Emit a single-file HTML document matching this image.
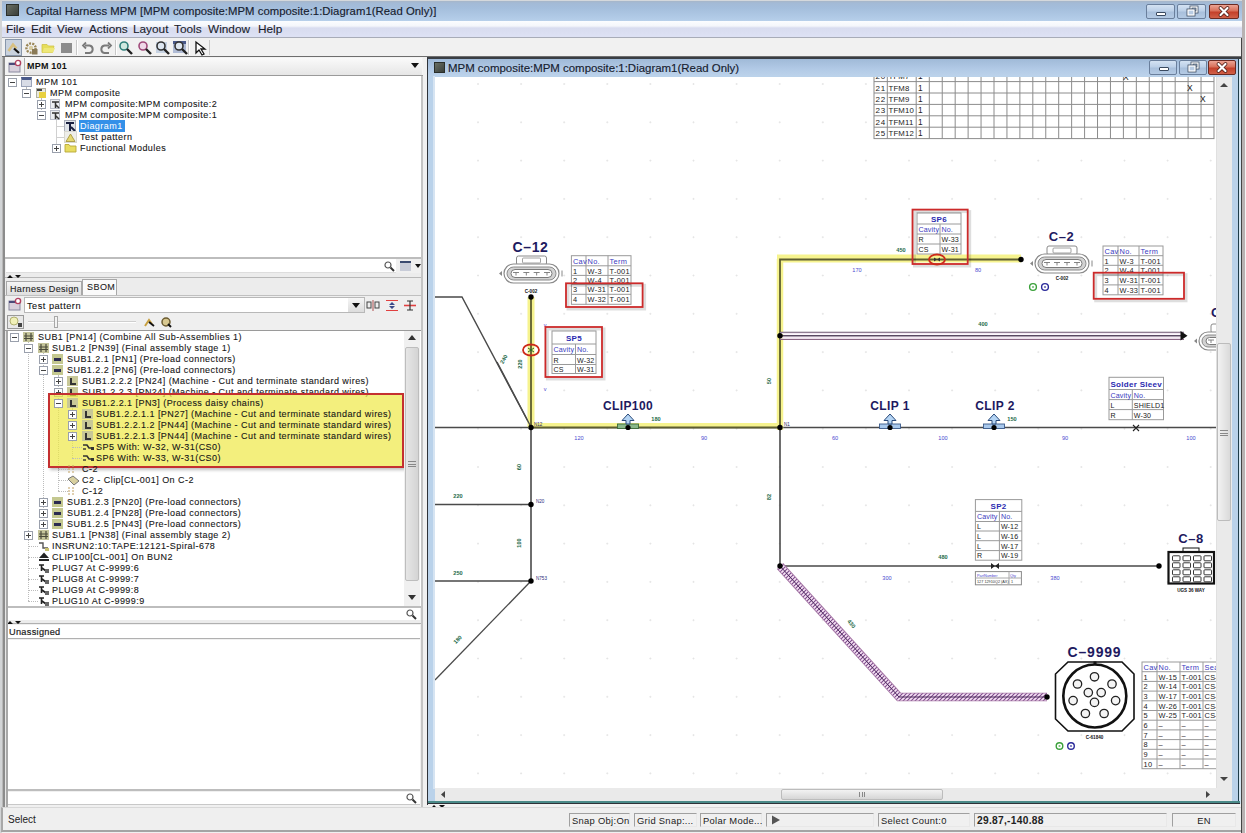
<!DOCTYPE html>
<html><head><meta charset="utf-8">
<style>
*{margin:0;padding:0;box-sizing:border-box}
html,body{width:1246px;height:833px;overflow:hidden;background:#f0f0f0;font-family:"Liberation Sans",sans-serif;color:#222}
.a{position:absolute}
.t{position:absolute;white-space:nowrap;line-height:1}
svg.a{overflow:visible}
</style></head><body>
<div class="a" style="left:0;top:0;width:1246px;height:833px;background:#f0f0f0"></div>
<div class="a" style="left:0;top:0;width:2px;height:833px;background:#d2d4d6"></div>
<div class="a" style="left:1243px;top:0;width:3px;height:833px;background:#c8ccd0"></div>
<div class="a" style="left:2px;top:0;width:1241px;height:21px;background:linear-gradient(#d4d8dc 0,#d4d8dc 1px,#a7b6c8 1px,#a3bad6 3px,#a4bedc 8px,#b3cce8 19px,#b8d0ea 21px)"></div>
<div class="a" style="left:6px;top:4px;width:13px;height:12px;background:linear-gradient(135deg,#6a6f64,#3a3f3a);border:1px solid #2a2e2a"></div>
<div class="t" style="left:26px;top:6px;font-size:11.3px;color:#16202e;letter-spacing:0.05px;-webkit-text-stroke:0.15px #16202e">Capital Harness MPM [MPM composite:MPM composite:1:Diagram1(Read Only)]</div>
<div class="a" style="left:1146px;top:4px;width:29px;height:15px;border:1px solid #6a7f9c;border-radius:2px;background:linear-gradient(#d4e2f2,#bcd0e8 45%,#a9c0dc 55%,#b4cae4)"></div>
<div class="a" style="left:1156px;top:12px;width:10px;height:4px;background:#fff;border:1px solid #3a4a60;border-radius:1px"></div>
<div class="a" style="left:1177px;top:4px;width:29px;height:15px;border:1px solid #6a7f9c;border-radius:2px;background:linear-gradient(#d4e2f2,#bcd0e8 45%,#a9c0dc 55%,#b4cae4)"></div>
<svg class="a" style="left:1186px;top:5px" width="13" height="12"><rect x="5" y="2" width="6" height="5" fill="none" stroke="#3a4a60" stroke-width="2.8"/><rect x="5" y="2" width="6" height="5" fill="none" stroke="#fff" stroke-width="1.3"/><rect x="2" y="5" width="6" height="5" fill="#3a4a60" stroke="#3a4a60" stroke-width="2.8"/><rect x="2" y="5" width="6" height="5" fill="#b8cce4" stroke="#fff" stroke-width="1.3"/></svg>
<div class="a" style="left:1209px;top:4px;width:30px;height:15px;border:1px solid #6a2a22;border-radius:2px;background:linear-gradient(#eca494,#d8705a 45%,#c4402a 55%,#d06048)"></div>
<svg class="a" style="left:1218px;top:6px" width="12" height="11"><path d="M2.5 2 L9.5 9 M9.5 2 L2.5 9" stroke="#4a1a14" stroke-width="3.8" stroke-linecap="round"/><path d="M2.5 2 L9.5 9 M9.5 2 L2.5 9" stroke="#fff" stroke-width="2.2" stroke-linecap="round"/></svg>
<div class="a" style="left:2px;top:21px;width:1241px;height:17px;background:linear-gradient(#fbfdff 0,#f4f6fb 5px,#d8dcef 7px,#dde1f4 15px);border-bottom:1px solid #a8acb8"></div>
<div class="t" style="left:6px;top:24px;font-size:11.8px;color:#1a1e2c;-webkit-text-stroke:0.1px #1a1e2c">File</div>
<div class="t" style="left:31px;top:24px;font-size:11.8px;color:#1a1e2c;-webkit-text-stroke:0.1px #1a1e2c">Edit</div>
<div class="t" style="left:57px;top:24px;font-size:11.8px;color:#1a1e2c;-webkit-text-stroke:0.1px #1a1e2c">View</div>
<div class="t" style="left:89px;top:24px;font-size:11.8px;color:#1a1e2c;-webkit-text-stroke:0.1px #1a1e2c">Actions</div>
<div class="t" style="left:133px;top:24px;font-size:11.8px;color:#1a1e2c;-webkit-text-stroke:0.1px #1a1e2c">Layout</div>
<div class="t" style="left:174px;top:24px;font-size:11.8px;color:#1a1e2c;-webkit-text-stroke:0.1px #1a1e2c">Tools</div>
<div class="t" style="left:208px;top:24px;font-size:11.8px;color:#1a1e2c;-webkit-text-stroke:0.1px #1a1e2c">Window</div>
<div class="t" style="left:258px;top:24px;font-size:11.8px;color:#1a1e2c;-webkit-text-stroke:0.1px #1a1e2c">Help</div>
<div class="a" style="left:2px;top:38px;width:1241px;height:19px;background:#f1f1f1;border-bottom:1px solid #6e6e6e"></div>
<div class="a" style="left:5px;top:39px;width:17px;height:17px;background:#c9d2de;border:1px solid #8896aa"></div>
<svg class="a" style="left:6px;top:41px" width="15" height="14"><path d="M2.5 10 L7 3.5 L10.5 7.5" stroke="#d8c080" stroke-width="2.6" fill="none"/><path d="M8 7.5 L13 12" stroke="#111" stroke-width="2.2"/></svg>
<svg class="a" style="left:25px;top:42px" width="13" height="13"><circle cx="6" cy="6" r="4.6" fill="none" stroke="#9a8656" stroke-width="2.4" stroke-dasharray="2 1.2"/><circle cx="6" cy="6" r="2.2" fill="#d8cca0"/><rect x="7" y="7" width="5.5" height="5.5" fill="#8a7a56"/></svg>
<svg class="a" style="left:41px;top:43px" width="15" height="11"><path d="M1 1.5 H6 L7.5 3 H13 L11.5 9.5 H1 Z" fill="#e6de5a" stroke="#d0c448" stroke-width="0.8"/><path d="M3 5 H14 L12 9.5 H1.5 Z" fill="#eee878"/></svg>
<div class="a" style="left:61px;top:43px;width:11px;height:10px;background:#8c8c8c"></div>
<div class="a" style="left:76px;top:40px;width:2px;height:15px;border-left:1px solid #c8c8c8;border-right:1px solid #fff"></div>
<div class="a" style="left:115px;top:40px;width:2px;height:15px;border-left:1px solid #c8c8c8;border-right:1px solid #fff"></div>
<div class="a" style="left:188px;top:40px;width:2px;height:15px;border-left:1px solid #c8c8c8;border-right:1px solid #fff"></div>
<svg class="a" style="left:81px;top:41px" width="32" height="14"><path d="M4 4.5 H8.5 A3.8 3.8 0 0 1 8.5 12 H4" stroke="#7a7a7a" stroke-width="2" fill="none"/><path d="M5 1.5 L2 4.5 L5 7.5" stroke="#7a7a7a" stroke-width="1.8" fill="none"/><path d="M28 4.5 H23.5 A3.8 3.8 0 0 0 23.5 12 H28" stroke="#7a7a7a" stroke-width="2" fill="none"/><path d="M27 1.5 L30 4.5 L27 7.5" stroke="#7a7a7a" stroke-width="1.8" fill="none"/></svg>
<svg class="a" style="left:118px;top:40px" width="16" height="16"><circle cx="6" cy="6" r="4" fill="#cfe8e0" stroke="#2f7f7a" stroke-width="1.6"/><path d="M9 9 L14 14" stroke="#222" stroke-width="2.4"/></svg>
<svg class="a" style="left:137px;top:40px" width="16" height="16"><circle cx="6" cy="6" r="4" fill="#f0d8e8" stroke="#a04a7a" stroke-width="1.6"/><path d="M9 9 L14 14" stroke="#222" stroke-width="2.4"/></svg>
<div class="a" style="left:156px;top:42px;width:11px;height:11px;background:#c7d3e3"></div><svg class="a" style="left:155px;top:40px" width="16" height="16"><circle cx="6" cy="6" r="4" fill="#dde6f0" stroke="#333" stroke-width="1.6"/><path d="M9 9 L14 14" stroke="#222" stroke-width="2.4"/></svg>
<div class="a" style="left:173px;top:41px;width:13px;height:4px;background:#4a5a8a"></div><div class="a" style="left:173px;top:44px;width:13px;height:9px;background:#b0bcd6"></div><svg class="a" style="left:173px;top:40px" width="16" height="16"><circle cx="6" cy="6" r="4" fill="#dde6f0" stroke="#333" stroke-width="1.6"/><path d="M9 9 L14 14" stroke="#222" stroke-width="2.4"/></svg>
<svg class="a" style="left:193px;top:40px" width="14" height="16"><path d="M3 2 L3 13 L6 10 L9 15 L11 14 L8 9 L12 9 Z" fill="#fff" stroke="#111" stroke-width="1.3"/></svg>
<div class="a" style="left:209px;top:40px;width:1px;height:15px;background:#c8c8c8"></div>
<div class="a" style="left:2px;top:57px;width:3px;height:751px;background:#8c8c8c;border-left:1px solid #b8b8b8"></div>
<div class="a" style="left:421px;top:57px;width:2px;height:750px;background:#c4c4c4"></div>
<div class="a" style="left:423px;top:57px;width:5px;height:750px;background:#f0f0f0"></div>
<div class="a" style="left:5px;top:57px;width:418px;height:19px;background:#f3f3f3;border-bottom:1px solid #9a9a9a"></div>
<div class="a" style="left:24px;top:58px;width:398px;height:17px;background:linear-gradient(#fafafa,#e6e6e6);border-left:1px solid #b0b0b0"></div>
<svg class="a" style="left:8px;top:59px" width="14" height="14"><rect x="1" y="4" width="11" height="9" fill="#d8d0dc" stroke="#8a8aa0"/><path d="M1 5 H8" stroke="#4a4a7a" stroke-width="2"/><circle cx="10" cy="4" r="2.6" fill="#fff" stroke="#b04060" stroke-width="1.4"/></svg>
<div class="t" style="left:27px;top:62px;font-size:9px;font-weight:bold;letter-spacing:0.2px;color:#111">MPM 101</div>
<svg class="a" style="left:411px;top:63px" width="8" height="5"><path d="M0 0 H8 L4 5 Z" fill="#111"/></svg>
<div class="a" style="left:5px;top:76px;width:416px;height:182px;background:#fff"></div>
<div class="a" style="left:5px;top:257px;width:416px;height:2px;background:#bdbdbd"></div>
<div class="a" style="left:26px;top:87px;width:1px;height:4px;border-left:1px dotted #b8b8b8"></div>
<div class="a" style="left:41px;top:98px;width:1px;height:20px;border-left:1px dotted #b8b8b8"></div>
<div class="a" style="left:56px;top:120px;width:1px;height:28px;border-left:1px solid #d0d0d0"></div>
<div class="a" style="left:56px;top:126px;width:8px;height:1px;background:#d0d0d0"></div>
<div class="a" style="left:56px;top:137px;width:8px;height:1px;background:#d0d0d0"></div>
<div class="a" style="left:8px;top:78px;width:9px;height:9px;border:1px solid #9aa0ac;background:#fff"></div><div class="a" style="left:10px;top:82px;width:5px;height:1px;background:#444"></div>
<div class="a" style="left:21px;top:77px;width:11px;height:10px;background:#d8dce6;border:1px solid #9aa3b8;border-top:3px solid #4a5a8a"></div>
<div class="t" style="left:36px;top:78px;font-size:9px;letter-spacing:0.45px;color:#161616;-webkit-text-stroke:0.1px #161616">MPM 101</div>
<div class="a" style="left:22px;top:89px;width:9px;height:9px;border:1px solid #9aa0ac;background:#fff"></div><div class="a" style="left:24px;top:93px;width:5px;height:1px;background:#444"></div>
<div class="a" style="left:36px;top:88px;width:10px;height:10px;background:#e8e8e0;border:1px solid #b0b0a0"></div><div class="a" style="left:39px;top:92px;width:7px;height:6px;background:#e8d040"></div><div class="a" style="left:37px;top:89px;width:5px;height:2px;background:#444"></div>
<div class="t" style="left:50px;top:89px;font-size:9px;letter-spacing:0.45px;color:#161616;-webkit-text-stroke:0.1px #161616">MPM composite</div>
<div class="a" style="left:37px;top:100px;width:9px;height:9px;border:1px solid #9aa0ac;background:#fff"></div><div class="a" style="left:39px;top:104px;width:5px;height:1px;background:#444"></div><div class="a" style="left:41px;top:102px;width:1px;height:5px;background:#444"></div>
<div class="a" style="left:50px;top:99px;width:10px;height:10px;background:#eceef2;border:1px solid #b8bcc8"></div><svg class="a" style="left:51px;top:100px" width="9" height="9"><path d="M1 2 H8 M4.5 2 V8 M5 5 L8 8" stroke="#333" stroke-width="1.5" fill="none"/></svg>
<div class="t" style="left:65px;top:100px;font-size:9px;letter-spacing:0.45px;color:#161616;-webkit-text-stroke:0.1px #161616">MPM composite:MPM composite:2</div>
<div class="a" style="left:37px;top:111px;width:9px;height:9px;border:1px solid #9aa0ac;background:#fff"></div><div class="a" style="left:39px;top:115px;width:5px;height:1px;background:#444"></div>
<div class="a" style="left:50px;top:110px;width:10px;height:10px;background:#eceef2;border:1px solid #b8bcc8"></div><svg class="a" style="left:51px;top:111px" width="9" height="9"><path d="M1 2 H8 M4.5 2 V8 M5 5 L8 8" stroke="#333" stroke-width="1.5" fill="none"/></svg>
<div class="t" style="left:65px;top:111px;font-size:9px;letter-spacing:0.45px;color:#161616;-webkit-text-stroke:0.1px #161616">MPM composite:MPM composite:1</div>
<div class="a" style="left:64px;top:120px;width:12px;height:12px;background:#e0e4ea;border:1px solid #a8acb8"></div><svg class="a" style="left:65px;top:121px" width="11" height="11"><path d="M1 2 H9 M5 2 V10 M6 6 L10 10" stroke="#1a2040" stroke-width="2" fill="none"/></svg>
<div class="a" style="left:79px;top:120px;width:46px;height:12px;background:#3390e8"></div>
<div class="t" style="left:80px;top:122px;font-size:9px;letter-spacing:0.45px;color:#fff">Diagram1</div>
<svg class="a" style="left:64px;top:131px" width="13" height="12"><rect x="0.5" y="0.5" width="12" height="11" fill="#eeeeea" stroke="#d8d8d0"/><path d="M6.5 3 L11 10.5 H2 Z" fill="#e4d870" stroke="#a89840" stroke-width="0.9"/></svg>
<div class="t" style="left:80px;top:133px;font-size:9px;letter-spacing:0.45px;color:#161616;-webkit-text-stroke:0.1px #161616">Test pattern</div>
<div class="a" style="left:52px;top:144px;width:9px;height:9px;border:1px solid #9aa0ac;background:#fff"></div><div class="a" style="left:54px;top:148px;width:5px;height:1px;background:#444"></div><div class="a" style="left:56px;top:146px;width:1px;height:5px;background:#444"></div>
<svg class="a" style="left:64px;top:142px" width="13" height="11"><path d="M1 2.5 H5 L6 4 H12 V10 H1 Z" fill="#e8dc60" stroke="#b8a838" stroke-width="0.9"/></svg>
<div class="t" style="left:80px;top:144px;font-size:9px;letter-spacing:0.45px;color:#161616;-webkit-text-stroke:0.1px #161616">Functional Modules</div>
<div class="a" style="left:6px;top:259px;width:390px;height:14px;background:#fff;border-bottom:1px solid #ddd"></div>
<svg class="a" style="left:384px;top:261px" width="11" height="11"><circle cx="4" cy="4" r="3" fill="#fff" stroke="#555" stroke-width="1.2"/><path d="M6.5 6.5 L10 10" stroke="#333" stroke-width="2"/></svg>
<div class="a" style="left:400px;top:261px;width:11px;height:10px;background:#c8ccd8;border-top:2px solid #3a4a70"></div>
<svg class="a" style="left:415px;top:264px" width="6" height="4"><path d="M0 0 H6 L3 4 Z" fill="#111"/></svg>
<div class="a" style="left:5px;top:273px;width:416px;height:5px;background:#ececec;border-bottom:1px solid #b8b8b8"></div>
<svg class="a" style="left:6px;top:274px" width="18" height="5"><path d="M1 4 L4 1 L7 4 Z M9 1 H15 L12 4 Z" fill="#111"/></svg>
<div class="a" style="left:5px;top:278px;width:416px;height:18px;background:#ececec"></div>
<div class="a" style="left:6px;top:281px;width:76px;height:15px;background:linear-gradient(#f4f4f4,#dedede);border:1px solid #a8a8a8;border-bottom:none"></div>
<div class="t" style="left:10px;top:285px;font-size:9px;letter-spacing:0.35px;color:#222;-webkit-text-stroke:0.1px #222">Harness Design</div>
<div class="a" style="left:82px;top:279px;width:35px;height:17px;background:#fafafa;border:1px solid #a8a8a8;border-bottom:none"></div>
<div class="t" style="left:87px;top:283px;font-size:9px;letter-spacing:0.45px;color:#222;-webkit-text-stroke:0.1px #222">SBOM</div>
<div class="a" style="left:5px;top:295px;width:416px;height:19px;background:#efefef;border-top:1px solid #c0c0c0"></div>
<svg class="a" style="left:8px;top:297px" width="14" height="14"><rect x="1" y="4" width="11" height="9" fill="#d8d0dc" stroke="#8a8aa0"/><path d="M1 5 H8" stroke="#4a4a7a" stroke-width="2"/><circle cx="10" cy="4" r="2.6" fill="#fff" stroke="#b04060" stroke-width="1.4"/></svg>
<div class="a" style="left:24px;top:297px;width:341px;height:16px;background:#fff;border:1px solid #b8b8b8"></div>
<div class="t" style="left:27px;top:302px;font-size:9.2px;letter-spacing:0.5px;color:#111;-webkit-text-stroke:0.1px #111">Test pattern</div>
<div class="a" style="left:348px;top:298px;width:16px;height:14px;background:linear-gradient(#f6f6f6,#dcdcdc)"></div>
<svg class="a" style="left:352px;top:303px" width="8" height="5"><path d="M0 0 H8 L4 5 Z" fill="#111"/></svg>
<svg class="a" style="left:366px;top:299px" width="52" height="13"><rect x="1" y="3" width="4" height="6" fill="none" stroke="#444"/><rect x="9" y="3" width="4" height="6" fill="none" stroke="#444"/><path d="M7 1 V12" stroke="#b05050"/><path d="M20 1.5 H32 M20 11.5 H32" stroke="#e04040" stroke-width="1.2"/><path d="M26 3 L23 6 H29 Z M26 10 L23 7 H29 Z" fill="#3a4a8a"/><path d="M38 6.5 H50" stroke="#e04040" stroke-width="1.6"/><path d="M41 2 H47 M41 11 H47 M44 2 V11" stroke="#333" stroke-width="1.2"/></svg>
<div class="a" style="left:5px;top:314px;width:416px;height:16px;background:#efefef"></div>
<div class="a" style="left:7px;top:315px;width:17px;height:14px;background:#e8e8e8;border:1px solid #9a9a9a"></div>
<svg class="a" style="left:9px;top:316px" width="14" height="12"><circle cx="5" cy="5" r="4" fill="#f0f0b8" stroke="#b0b070"/><path d="M9 7 H13 V11 H9 Z" fill="#444"/></svg>
<div class="a" style="left:28px;top:321px;width:108px;height:2px;background:#cfcfcf;border-bottom:1px solid #fff"></div>
<div class="a" style="left:54px;top:316px;width:4px;height:12px;background:#f4f4f4;border:1px solid #a8a8a8"></div>
<svg class="a" style="left:143px;top:316px" width="30" height="12"><path d="M2 10 L6 4 L9 8" stroke="#c8a040" stroke-width="2" fill="none"/><path d="M6 6 L11 10" stroke="#111" stroke-width="1.8"/><circle cx="23" cy="6" r="4" fill="#d8c890" stroke="#6a5a30" stroke-width="1.5"/><path d="M25 8 L28 11" stroke="#111" stroke-width="2"/></svg>
<div class="a" style="left:5px;top:330px;width:416px;height:277px;background:#fff;border-top:1px solid #9a9a9a"></div>
<div class="a" style="left:28px;top:342px;width:1px;height:259px;border-left:1px dotted #bcbcbc"></div>
<div class="a" style="left:43px;top:353px;width:1px;height:171px;border-left:1px dotted #bcbcbc"></div>
<div class="a" style="left:58px;top:375px;width:1px;height:116px;border-left:1px dotted #bcbcbc"></div>
<div class="a" style="left:72px;top:408px;width:1px;height:50px;border-left:1px dotted #bcbcbc"></div>
<div class="a" style="left:10px;top:333px;width:9px;height:9px;border:1px solid #9aa0ac;background:#fff"></div><div class="a" style="left:12px;top:337px;width:5px;height:1px;background:#444"></div>
<svg class="a" style="left:23px;top:332px" width="11" height="10"><rect x="0" y="0" width="11" height="10" fill="#c4c49a"/><path d="M3 1 V9 M8 1 V9 M1 4 H10 M1 6.5 H10" stroke="#4a4a3a" stroke-width="1.2"/></svg>
<div class="t" style="left:38px;top:333px;font-size:9px;letter-spacing:0.45px;color:#161616;-webkit-text-stroke:0.1px #161616">SUB1 [PN14] (Combine All Sub-Assemblies 1)</div>
<div class="a" style="left:24px;top:344px;width:9px;height:9px;border:1px solid #9aa0ac;background:#fff"></div><div class="a" style="left:26px;top:348px;width:5px;height:1px;background:#444"></div>
<svg class="a" style="left:38px;top:343px" width="11" height="10"><rect x="0" y="0" width="11" height="10" fill="#c4c49a"/><path d="M3 1 V9 M8 1 V9 M1 4 H10 M1 6.5 H10" stroke="#4a4a3a" stroke-width="1.2"/></svg>
<div class="t" style="left:52px;top:344px;font-size:9px;letter-spacing:0.45px;color:#161616;-webkit-text-stroke:0.1px #161616">SUB1.2 [PN39] (Final assembly stage 1)</div>
<div class="a" style="left:39px;top:355px;width:9px;height:9px;border:1px solid #9aa0ac;background:#fff"></div><div class="a" style="left:41px;top:359px;width:5px;height:1px;background:#444"></div><div class="a" style="left:43px;top:357px;width:1px;height:5px;background:#444"></div>
<div class="a" style="left:52px;top:354px;width:11px;height:10px;background:#c4c890"></div><div class="a" style="left:54px;top:358px;width:7px;height:3px;background:#2a2a50"></div>
<div class="t" style="left:67px;top:355px;font-size:9px;letter-spacing:0.45px;color:#161616;-webkit-text-stroke:0.1px #161616">SUB1.2.1 [PN1] (Pre-load connectors)</div>
<div class="a" style="left:39px;top:366px;width:9px;height:9px;border:1px solid #9aa0ac;background:#fff"></div><div class="a" style="left:41px;top:370px;width:5px;height:1px;background:#444"></div>
<div class="a" style="left:52px;top:365px;width:11px;height:10px;background:#c4c890"></div><div class="a" style="left:54px;top:369px;width:7px;height:3px;background:#2a2a50"></div>
<div class="t" style="left:67px;top:366px;font-size:9px;letter-spacing:0.45px;color:#161616;-webkit-text-stroke:0.1px #161616">SUB1.2.2 [PN6] (Pre-load connectors)</div>
<div class="a" style="left:54px;top:377px;width:9px;height:9px;border:1px solid #9aa0ac;background:#fff"></div><div class="a" style="left:56px;top:381px;width:5px;height:1px;background:#444"></div><div class="a" style="left:58px;top:379px;width:1px;height:5px;background:#444"></div>
<div class="a" style="left:67px;top:376px;width:11px;height:10px;background:#c8c898"></div><svg class="a" style="left:68px;top:377px" width="9" height="9"><path d="M3 1 V7 H8" stroke="#333" stroke-width="2" fill="none"/></svg>
<div class="t" style="left:82px;top:377px;font-size:9px;letter-spacing:0.45px;color:#161616;-webkit-text-stroke:0.1px #161616">SUB1.2.2.2 [PN24] (Machine - Cut and terminate standard wires)</div>
<div class="a" style="left:54px;top:388px;width:9px;height:9px;border:1px solid #9aa0ac;background:#fff"></div><div class="a" style="left:56px;top:392px;width:5px;height:1px;background:#444"></div><div class="a" style="left:58px;top:390px;width:1px;height:5px;background:#444"></div>
<div class="a" style="left:67px;top:387px;width:11px;height:10px;background:#c8c898"></div><svg class="a" style="left:68px;top:388px" width="9" height="9"><path d="M3 1 V7 H8" stroke="#333" stroke-width="2" fill="none"/></svg>
<div class="t" style="left:82px;top:388px;font-size:9px;letter-spacing:0.45px;color:#161616;-webkit-text-stroke:0.1px #161616">SUB1.2.2.3 [PN24] (Machine - Cut and terminate standard wires)</div>
<div class="a" style="left:48px;top:393px;width:356px;height:75px;background:rgba(238,232,70,0.7);border:2px solid #c43030;box-shadow:2px 2px 3px rgba(0,0,0,0.25)"></div>
<div class="a" style="left:54px;top:399px;width:9px;height:9px;border:1px solid #9aa0ac;background:#fff"></div><div class="a" style="left:56px;top:403px;width:5px;height:1px;background:#444"></div>
<div class="a" style="left:67px;top:398px;width:11px;height:10px;background:#c8c898"></div><svg class="a" style="left:68px;top:399px" width="9" height="9"><path d="M3 1 V7 H8" stroke="#333" stroke-width="2" fill="none"/></svg>
<div class="t" style="left:82px;top:399px;font-size:9px;letter-spacing:0.45px;color:#161616;-webkit-text-stroke:0.1px #161616">SUB1.2.2.1 [PN3] (Process daisy chains)</div>
<div class="a" style="left:68px;top:410px;width:9px;height:9px;border:1px solid #9aa0ac;background:#fff"></div><div class="a" style="left:70px;top:414px;width:5px;height:1px;background:#444"></div><div class="a" style="left:72px;top:412px;width:1px;height:5px;background:#444"></div>
<div class="a" style="left:82px;top:409px;width:11px;height:10px;background:#c8c898"></div><svg class="a" style="left:83px;top:410px" width="9" height="9"><path d="M3 1 V7 H8" stroke="#333" stroke-width="2" fill="none"/></svg>
<div class="t" style="left:96px;top:410px;font-size:9px;letter-spacing:0.45px;color:#161616;-webkit-text-stroke:0.1px #161616">SUB1.2.2.1.1 [PN27] (Machine - Cut and terminate standard wires)</div>
<div class="a" style="left:68px;top:421px;width:9px;height:9px;border:1px solid #9aa0ac;background:#fff"></div><div class="a" style="left:70px;top:425px;width:5px;height:1px;background:#444"></div><div class="a" style="left:72px;top:423px;width:1px;height:5px;background:#444"></div>
<div class="a" style="left:82px;top:420px;width:11px;height:10px;background:#c8c898"></div><svg class="a" style="left:83px;top:421px" width="9" height="9"><path d="M3 1 V7 H8" stroke="#333" stroke-width="2" fill="none"/></svg>
<div class="t" style="left:96px;top:421px;font-size:9px;letter-spacing:0.45px;color:#161616;-webkit-text-stroke:0.1px #161616">SUB1.2.2.1.2 [PN44] (Machine - Cut and terminate standard wires)</div>
<div class="a" style="left:68px;top:432px;width:9px;height:9px;border:1px solid #9aa0ac;background:#fff"></div><div class="a" style="left:70px;top:436px;width:5px;height:1px;background:#444"></div><div class="a" style="left:72px;top:434px;width:1px;height:5px;background:#444"></div>
<div class="a" style="left:82px;top:431px;width:11px;height:10px;background:#c8c898"></div><svg class="a" style="left:83px;top:432px" width="9" height="9"><path d="M3 1 V7 H8" stroke="#333" stroke-width="2" fill="none"/></svg>
<div class="t" style="left:96px;top:432px;font-size:9px;letter-spacing:0.45px;color:#161616;-webkit-text-stroke:0.1px #161616">SUB1.2.2.1.3 [PN44] (Machine - Cut and terminate standard wires)</div>
<div class="a" style="left:72px;top:447px;width:10px;height:1px;border-top:1px dotted #bcbcbc"></div>
<svg class="a" style="left:82px;top:442px" width="12" height="10"><path d="M1 3 H5 L7 6 H9" stroke="#333" stroke-width="1.6" fill="none"/><path d="M1 7 H4" stroke="#333" stroke-width="1.4"/><rect x="9" y="5" width="3" height="3" fill="#333"/></svg>
<div class="t" style="left:96px;top:443px;font-size:9px;letter-spacing:0.45px;color:#161616;-webkit-text-stroke:0.1px #161616">SP5 With: W-32, W-31(CS0)</div>
<div class="a" style="left:72px;top:458px;width:10px;height:1px;border-top:1px dotted #bcbcbc"></div>
<svg class="a" style="left:82px;top:453px" width="12" height="10"><path d="M1 3 H5 L7 6 H9" stroke="#333" stroke-width="1.6" fill="none"/><path d="M1 7 H4" stroke="#333" stroke-width="1.4"/><rect x="9" y="5" width="3" height="3" fill="#333"/></svg>
<div class="t" style="left:96px;top:454px;font-size:9px;letter-spacing:0.45px;color:#161616;-webkit-text-stroke:0.1px #161616">SP6 With: W-33, W-31(CS0)</div>
<div class="a" style="left:58px;top:469px;width:10px;height:1px;border-top:1px dotted #bcbcbc"></div>
<svg class="a" style="left:67px;top:464px" width="10" height="11"><path d="M2 1 V10 M6 1 V10" stroke="#c0a060" stroke-width="1" stroke-dasharray="2 1"/></svg>
<div class="t" style="left:82px;top:465px;font-size:9px;letter-spacing:0.45px;color:#161616;-webkit-text-stroke:0.1px #161616">C-2</div>
<div class="a" style="left:58px;top:480px;width:10px;height:1px;border-top:1px dotted #bcbcbc"></div>
<svg class="a" style="left:67px;top:475px" width="13" height="11"><path d="M1 4 L6 1 L12 6 L7 10 Z" fill="#d8d0a0" stroke="#777" stroke-width="1"/></svg>
<div class="t" style="left:82px;top:476px;font-size:9px;letter-spacing:0.45px;color:#161616;-webkit-text-stroke:0.1px #161616">C2 - Clip[CL-001] On C-2</div>
<div class="a" style="left:58px;top:491px;width:10px;height:1px;border-top:1px dotted #bcbcbc"></div>
<svg class="a" style="left:67px;top:486px" width="10" height="11"><path d="M2 1 V10 M6 1 V10" stroke="#c0a060" stroke-width="1" stroke-dasharray="2 1"/></svg>
<div class="t" style="left:82px;top:487px;font-size:9px;letter-spacing:0.45px;color:#161616;-webkit-text-stroke:0.1px #161616">C-12</div>
<div class="a" style="left:39px;top:498px;width:9px;height:9px;border:1px solid #9aa0ac;background:#fff"></div><div class="a" style="left:41px;top:502px;width:5px;height:1px;background:#444"></div><div class="a" style="left:43px;top:500px;width:1px;height:5px;background:#444"></div>
<div class="a" style="left:52px;top:497px;width:11px;height:10px;background:#c4c890"></div><div class="a" style="left:54px;top:501px;width:7px;height:3px;background:#2a2a50"></div>
<div class="t" style="left:67px;top:498px;font-size:9px;letter-spacing:0.45px;color:#161616;-webkit-text-stroke:0.1px #161616">SUB1.2.3 [PN20] (Pre-load connectors)</div>
<div class="a" style="left:39px;top:509px;width:9px;height:9px;border:1px solid #9aa0ac;background:#fff"></div><div class="a" style="left:41px;top:513px;width:5px;height:1px;background:#444"></div><div class="a" style="left:43px;top:511px;width:1px;height:5px;background:#444"></div>
<div class="a" style="left:52px;top:508px;width:11px;height:10px;background:#c4c890"></div><div class="a" style="left:54px;top:512px;width:7px;height:3px;background:#2a2a50"></div>
<div class="t" style="left:67px;top:509px;font-size:9px;letter-spacing:0.45px;color:#161616;-webkit-text-stroke:0.1px #161616">SUB1.2.4 [PN28] (Pre-load connectors)</div>
<div class="a" style="left:39px;top:520px;width:9px;height:9px;border:1px solid #9aa0ac;background:#fff"></div><div class="a" style="left:41px;top:524px;width:5px;height:1px;background:#444"></div><div class="a" style="left:43px;top:522px;width:1px;height:5px;background:#444"></div>
<div class="a" style="left:52px;top:519px;width:11px;height:10px;background:#c4c890"></div><div class="a" style="left:54px;top:523px;width:7px;height:3px;background:#2a2a50"></div>
<div class="t" style="left:67px;top:520px;font-size:9px;letter-spacing:0.45px;color:#161616;-webkit-text-stroke:0.1px #161616">SUB1.2.5 [PN43] (Pre-load connectors)</div>
<div class="a" style="left:24px;top:531px;width:9px;height:9px;border:1px solid #9aa0ac;background:#fff"></div><div class="a" style="left:26px;top:535px;width:5px;height:1px;background:#444"></div><div class="a" style="left:28px;top:533px;width:1px;height:5px;background:#444"></div>
<svg class="a" style="left:38px;top:530px" width="11" height="10"><rect x="0" y="0" width="11" height="10" fill="#c4c49a"/><path d="M3 1 V9 M8 1 V9 M1 4 H10 M1 6.5 H10" stroke="#4a4a3a" stroke-width="1.2"/></svg>
<div class="t" style="left:52px;top:531px;font-size:9px;letter-spacing:0.45px;color:#161616;-webkit-text-stroke:0.1px #161616">SUB1.1 [PN38] (Final assembly stage 2)</div>
<div class="a" style="left:28px;top:546px;width:10px;height:1px;border-top:1px dotted #bcbcbc"></div>
<svg class="a" style="left:38px;top:541px" width="12" height="11"><path d="M1 2 H5 V7 H10" stroke="#555" stroke-width="1.4" fill="none"/><rect x="7" y="7" width="4" height="3" fill="#c8c070"/></svg>
<div class="t" style="left:52px;top:542px;font-size:9px;letter-spacing:0.45px;color:#161616;-webkit-text-stroke:0.1px #161616">INSRUN2:10:TAPE:12121-Spiral-678</div>
<div class="a" style="left:28px;top:557px;width:10px;height:1px;border-top:1px dotted #bcbcbc"></div>
<svg class="a" style="left:38px;top:552px" width="12" height="11"><path d="M6 0.5 L11 6 H1 Z" fill="#222"/><rect x="1" y="7" width="10" height="2" fill="#222"/></svg>
<div class="t" style="left:52px;top:553px;font-size:9px;letter-spacing:0.45px;color:#161616;-webkit-text-stroke:0.1px #161616">CLIP100[CL-001] On BUN2</div>
<div class="a" style="left:28px;top:568px;width:10px;height:1px;border-top:1px dotted #bcbcbc"></div>
<svg class="a" style="left:38px;top:563px" width="12" height="11"><path d="M1 2 H6 M3.5 2 V8 M4 5 L8 8" stroke="#222" stroke-width="1.6" fill="none"/><rect x="7" y="6" width="4" height="4" fill="#666"/></svg>
<div class="t" style="left:52px;top:564px;font-size:9px;letter-spacing:0.45px;color:#161616;-webkit-text-stroke:0.1px #161616">PLUG7 At C-9999:6</div>
<div class="a" style="left:28px;top:579px;width:10px;height:1px;border-top:1px dotted #bcbcbc"></div>
<svg class="a" style="left:38px;top:574px" width="12" height="11"><path d="M1 2 H6 M3.5 2 V8 M4 5 L8 8" stroke="#222" stroke-width="1.6" fill="none"/><rect x="7" y="6" width="4" height="4" fill="#666"/></svg>
<div class="t" style="left:52px;top:575px;font-size:9px;letter-spacing:0.45px;color:#161616;-webkit-text-stroke:0.1px #161616">PLUG8 At C-9999:7</div>
<div class="a" style="left:28px;top:590px;width:10px;height:1px;border-top:1px dotted #bcbcbc"></div>
<svg class="a" style="left:38px;top:585px" width="12" height="11"><path d="M1 2 H6 M3.5 2 V8 M4 5 L8 8" stroke="#222" stroke-width="1.6" fill="none"/><rect x="7" y="6" width="4" height="4" fill="#666"/></svg>
<div class="t" style="left:52px;top:586px;font-size:9px;letter-spacing:0.45px;color:#161616;-webkit-text-stroke:0.1px #161616">PLUG9 At C-9999:8</div>
<div class="a" style="left:28px;top:601px;width:10px;height:1px;border-top:1px dotted #bcbcbc"></div>
<svg class="a" style="left:38px;top:596px" width="12" height="11"><path d="M1 2 H6 M3.5 2 V8 M4 5 L8 8" stroke="#222" stroke-width="1.6" fill="none"/><rect x="7" y="6" width="4" height="4" fill="#666"/></svg>
<div class="t" style="left:52px;top:597px;font-size:9px;letter-spacing:0.45px;color:#161616;-webkit-text-stroke:0.1px #161616">PLUG10 At C-9999:9</div>
<div class="a" style="left:404px;top:331px;width:16px;height:275px;background:#f0f0f0"></div>
<svg class="a" style="left:408px;top:335px" width="8" height="5"><path d="M0 5 L4 0 L8 5 Z" fill="#333"/></svg>
<div class="a" style="left:405px;top:347px;width:14px;height:234px;background:linear-gradient(90deg,#e6e6e6,#d4d4d4);border:1px solid #bdbdbd;border-radius:2px"></div>
<div class="a" style="left:408px;top:461px;width:8px;height:6px;border-top:1px solid #888;border-bottom:1px solid #888"></div><div class="a" style="left:408px;top:464px;width:8px;height:1px;background:#888"></div>
<svg class="a" style="left:408px;top:595px" width="8" height="5"><path d="M0 0 H8 L4 5 Z" fill="#333"/></svg>
<div class="a" style="left:5px;top:606px;width:416px;height:2px;background:#bdbdbd"></div>
<div class="a" style="left:6px;top:608px;width:414px;height:12px;background:#fff"></div>
<svg class="a" style="left:406px;top:609px" width="11" height="11"><circle cx="4" cy="4" r="3" fill="#fff" stroke="#555" stroke-width="1.2"/><path d="M6.5 6.5 L10 10" stroke="#333" stroke-width="2"/></svg>
<div class="a" style="left:5px;top:620px;width:416px;height:4px;background:#ececec;border-bottom:1px solid #b0b0b0"></div>
<svg class="a" style="left:6px;top:620px" width="18" height="5"><path d="M1 4 L4 1 L7 4 Z M9 1 H15 L12 4 Z" fill="#111"/></svg>
<div class="a" style="left:6px;top:625px;width:414px;height:14px;background:#fff;border-bottom:1px solid #b0b0b0"></div>
<div class="t" style="left:9px;top:628px;font-size:9.2px;letter-spacing:0.3px;color:#222;-webkit-text-stroke:0.2px #222">Unassigned</div>
<div class="a" style="left:6px;top:640px;width:414px;height:151px;background:#fff;border-bottom:2px solid #bdbdbd"></div>
<div class="a" style="left:6px;top:792px;width:414px;height:13px;background:#fff;border-bottom:1px solid #c8c8c8"></div>
<svg class="a" style="left:406px;top:793px" width="11" height="11"><circle cx="4" cy="4" r="3" fill="#fff" stroke="#555" stroke-width="1.2"/><path d="M6.5 6.5 L10 10" stroke="#333" stroke-width="2"/></svg>
<div class="a" style="left:5px;top:331px;width:1px;height:476px;background:#e8e8e8"></div><div class="a" style="left:6px;top:331px;width:2px;height:476px;background:#a8a8a8"></div>
<div class="a" style="left:427px;top:57px;width:814px;height:748px;background:#bad2ea;border:1px solid #2e3238;border-top:2px solid #3a3e44"></div>
<div class="a" style="left:433px;top:76px;width:2px;height:713px;background:#d6e4f2"></div>
<div class="a" style="left:428px;top:59px;width:812px;height:17px;background:linear-gradient(#a0bad8,#b2cae6 60%,#bcd2ea)"></div>
<div class="a" style="left:434px;top:62px;width:11px;height:11px;background:linear-gradient(135deg,#6a6f64,#3a3f3a);border:1px solid #2a2e2a"></div>
<div class="t" style="left:448px;top:63px;font-size:11.45px;color:#16202e;-webkit-text-stroke:0.15px #16202e">MPM composite:MPM composite:1:Diagram1(Read Only)</div>
<div class="a" style="left:1149px;top:60px;width:28px;height:15px;border:1px solid #6a7f9c;border-radius:2px;background:linear-gradient(#d4e2f2,#bcd0e8 45%,#a9c0dc 55%,#b4cae4)"></div>
<div class="a" style="left:1159px;top:67px;width:10px;height:4px;background:#fff;border:1px solid #3a4a60;border-radius:1px"></div>
<div class="a" style="left:1179px;top:60px;width:28px;height:15px;border:1px solid #6a7f9c;border-radius:2px;background:linear-gradient(#d4e2f2,#bcd0e8 45%,#a9c0dc 55%,#b4cae4)"></div>
<svg class="a" style="left:1187px;top:61px" width="13" height="12"><rect x="5" y="2" width="6" height="5" fill="none" stroke="#3a4a60" stroke-width="2.8"/><rect x="5" y="2" width="6" height="5" fill="none" stroke="#fff" stroke-width="1.3"/><rect x="2" y="5" width="6" height="5" fill="#3a4a60" stroke="#3a4a60" stroke-width="2.8"/><rect x="2" y="5" width="6" height="5" fill="#b8cce4" stroke="#fff" stroke-width="1.3"/></svg>
<div class="a" style="left:1208px;top:60px;width:28px;height:15px;border:1px solid #6a2a22;border-radius:2px;background:linear-gradient(#eca494,#d8705a 45%,#c4402a 55%,#d06048)"></div>
<svg class="a" style="left:1216px;top:62px" width="12" height="11"><path d="M2.5 2 L9.5 9 M9.5 2 L2.5 9" stroke="#4a1a14" stroke-width="3.8" stroke-linecap="round"/><path d="M2.5 2 L9.5 9 M9.5 2 L2.5 9" stroke="#fff" stroke-width="2.2" stroke-linecap="round"/></svg>
<div class="a" style="left:1238px;top:59px;width:1px;height:745px;background:#1e3c4a"></div><div class="a" style="left:1239px;top:59px;width:2px;height:745px;background:#d4e6f2"></div>
<div class="a" style="left:428px;top:801px;width:812px;height:3px;background:#4a8a88;border-bottom:1px solid #2e3238"></div>
<div class="a" style="left:1216px;top:77px;width:16px;height:711px;background:#eaeaea;border-left:1px solid #e0e0e0"></div>
<svg class="a" style="left:1220px;top:83px" width="8" height="4"><path d="M0 4 L4 0 L8 4 Z" fill="#444"/></svg>
<div class="a" style="left:1217px;top:343px;width:14px;height:178px;background:linear-gradient(90deg,#f2f2f2,#dadada);border:1px solid #bcbcbc;border-radius:2px"></div>
<div class="a" style="left:1220px;top:430px;width:8px;height:6px;border-top:1px solid #888;border-bottom:1px solid #888"></div><div class="a" style="left:1220px;top:433px;width:8px;height:1px;background:#888"></div>
<svg class="a" style="left:1220px;top:777px" width="8" height="4"><path d="M0 0 H8 L4 4 Z" fill="#444"/></svg>
<div class="a" style="left:435px;top:788px;width:781px;height:13px;background:#eaeaea"></div>
<svg class="a" style="left:441px;top:791px" width="4" height="7"><path d="M4 0 V7 L0 3.5 Z" fill="#444"/></svg>
<div class="a" style="left:781px;top:789px;width:162px;height:11px;background:linear-gradient(#f2f2f2,#d6d6d6);border:1px solid #bcbcbc;border-radius:2px"></div>
<div class="a" style="left:859px;top:792px;width:6px;height:5px;border-left:1px solid #888;border-right:1px solid #888"></div><div class="a" style="left:862px;top:792px;width:1px;height:5px;background:#888"></div>
<svg class="a" style="left:1206px;top:791px" width="4" height="7"><path d="M0 0 V7 L4 3.5 Z" fill="#444"/></svg>
<div class="a" style="left:1216px;top:788px;width:16px;height:13px;background:#eaeaea"></div>
<svg class="a" style="left:435px;top:77px;overflow:hidden" width="781" height="711" viewBox="435 77 781 711" font-family="Liberation Sans, sans-serif">
<rect x="435" y="77" width="781" height="711" fill="#fff"/>
<path d="M477.0 84.0h2M478.0 83.0v2M477.0 122.3h2M478.0 121.3v2M477.0 160.6h2M478.0 159.6v2M477.0 198.89999999999998h2M478.0 197.89999999999998v2M477.0 237.2h2M478.0 236.2v2M477.0 275.5h2M478.0 274.5v2M477.0 313.79999999999995h2M478.0 312.79999999999995v2M477.0 352.09999999999997h2M478.0 351.09999999999997v2M477.0 390.4h2M478.0 389.4v2M477.0 428.7h2M478.0 427.7v2M477.0 467.0h2M478.0 466.0v2M477.0 505.29999999999995h2M478.0 504.29999999999995v2M477.0 543.5999999999999h2M478.0 542.5999999999999v2M477.0 581.9h2M478.0 580.9v2M477.0 620.1999999999999h2M478.0 619.1999999999999v2M477.0 658.5h2M478.0 657.5v2M477.0 696.8h2M478.0 695.8v2M477.0 735.0999999999999h2M478.0 734.0999999999999v2M477.0 773.4h2M478.0 772.4v2M520.1 84.0h2M521.1 83.0v2M520.1 122.3h2M521.1 121.3v2M520.1 160.6h2M521.1 159.6v2M520.1 198.89999999999998h2M521.1 197.89999999999998v2M520.1 237.2h2M521.1 236.2v2M520.1 275.5h2M521.1 274.5v2M520.1 313.79999999999995h2M521.1 312.79999999999995v2M520.1 352.09999999999997h2M521.1 351.09999999999997v2M520.1 390.4h2M521.1 389.4v2M520.1 428.7h2M521.1 427.7v2M520.1 467.0h2M521.1 466.0v2M520.1 505.29999999999995h2M521.1 504.29999999999995v2M520.1 543.5999999999999h2M521.1 542.5999999999999v2M520.1 581.9h2M521.1 580.9v2M520.1 620.1999999999999h2M521.1 619.1999999999999v2M520.1 658.5h2M521.1 657.5v2M520.1 696.8h2M521.1 695.8v2M520.1 735.0999999999999h2M521.1 734.0999999999999v2M520.1 773.4h2M521.1 772.4v2M563.2 84.0h2M564.2 83.0v2M563.2 122.3h2M564.2 121.3v2M563.2 160.6h2M564.2 159.6v2M563.2 198.89999999999998h2M564.2 197.89999999999998v2M563.2 237.2h2M564.2 236.2v2M563.2 275.5h2M564.2 274.5v2M563.2 313.79999999999995h2M564.2 312.79999999999995v2M563.2 352.09999999999997h2M564.2 351.09999999999997v2M563.2 390.4h2M564.2 389.4v2M563.2 428.7h2M564.2 427.7v2M563.2 467.0h2M564.2 466.0v2M563.2 505.29999999999995h2M564.2 504.29999999999995v2M563.2 543.5999999999999h2M564.2 542.5999999999999v2M563.2 581.9h2M564.2 580.9v2M563.2 620.1999999999999h2M564.2 619.1999999999999v2M563.2 658.5h2M564.2 657.5v2M563.2 696.8h2M564.2 695.8v2M563.2 735.0999999999999h2M564.2 734.0999999999999v2M563.2 773.4h2M564.2 772.4v2M606.3 84.0h2M607.3 83.0v2M606.3 122.3h2M607.3 121.3v2M606.3 160.6h2M607.3 159.6v2M606.3 198.89999999999998h2M607.3 197.89999999999998v2M606.3 237.2h2M607.3 236.2v2M606.3 275.5h2M607.3 274.5v2M606.3 313.79999999999995h2M607.3 312.79999999999995v2M606.3 352.09999999999997h2M607.3 351.09999999999997v2M606.3 390.4h2M607.3 389.4v2M606.3 428.7h2M607.3 427.7v2M606.3 467.0h2M607.3 466.0v2M606.3 505.29999999999995h2M607.3 504.29999999999995v2M606.3 543.5999999999999h2M607.3 542.5999999999999v2M606.3 581.9h2M607.3 580.9v2M606.3 620.1999999999999h2M607.3 619.1999999999999v2M606.3 658.5h2M607.3 657.5v2M606.3 696.8h2M607.3 695.8v2M606.3 735.0999999999999h2M607.3 734.0999999999999v2M606.3 773.4h2M607.3 772.4v2M649.4 84.0h2M650.4 83.0v2M649.4 122.3h2M650.4 121.3v2M649.4 160.6h2M650.4 159.6v2M649.4 198.89999999999998h2M650.4 197.89999999999998v2M649.4 237.2h2M650.4 236.2v2M649.4 275.5h2M650.4 274.5v2M649.4 313.79999999999995h2M650.4 312.79999999999995v2M649.4 352.09999999999997h2M650.4 351.09999999999997v2M649.4 390.4h2M650.4 389.4v2M649.4 428.7h2M650.4 427.7v2M649.4 467.0h2M650.4 466.0v2M649.4 505.29999999999995h2M650.4 504.29999999999995v2M649.4 543.5999999999999h2M650.4 542.5999999999999v2M649.4 581.9h2M650.4 580.9v2M649.4 620.1999999999999h2M650.4 619.1999999999999v2M649.4 658.5h2M650.4 657.5v2M649.4 696.8h2M650.4 695.8v2M649.4 735.0999999999999h2M650.4 734.0999999999999v2M649.4 773.4h2M650.4 772.4v2M692.5 84.0h2M693.5 83.0v2M692.5 122.3h2M693.5 121.3v2M692.5 160.6h2M693.5 159.6v2M692.5 198.89999999999998h2M693.5 197.89999999999998v2M692.5 237.2h2M693.5 236.2v2M692.5 275.5h2M693.5 274.5v2M692.5 313.79999999999995h2M693.5 312.79999999999995v2M692.5 352.09999999999997h2M693.5 351.09999999999997v2M692.5 390.4h2M693.5 389.4v2M692.5 428.7h2M693.5 427.7v2M692.5 467.0h2M693.5 466.0v2M692.5 505.29999999999995h2M693.5 504.29999999999995v2M692.5 543.5999999999999h2M693.5 542.5999999999999v2M692.5 581.9h2M693.5 580.9v2M692.5 620.1999999999999h2M693.5 619.1999999999999v2M692.5 658.5h2M693.5 657.5v2M692.5 696.8h2M693.5 695.8v2M692.5 735.0999999999999h2M693.5 734.0999999999999v2M692.5 773.4h2M693.5 772.4v2M735.6 84.0h2M736.6 83.0v2M735.6 122.3h2M736.6 121.3v2M735.6 160.6h2M736.6 159.6v2M735.6 198.89999999999998h2M736.6 197.89999999999998v2M735.6 237.2h2M736.6 236.2v2M735.6 275.5h2M736.6 274.5v2M735.6 313.79999999999995h2M736.6 312.79999999999995v2M735.6 352.09999999999997h2M736.6 351.09999999999997v2M735.6 390.4h2M736.6 389.4v2M735.6 428.7h2M736.6 427.7v2M735.6 467.0h2M736.6 466.0v2M735.6 505.29999999999995h2M736.6 504.29999999999995v2M735.6 543.5999999999999h2M736.6 542.5999999999999v2M735.6 581.9h2M736.6 580.9v2M735.6 620.1999999999999h2M736.6 619.1999999999999v2M735.6 658.5h2M736.6 657.5v2M735.6 696.8h2M736.6 695.8v2M735.6 735.0999999999999h2M736.6 734.0999999999999v2M735.6 773.4h2M736.6 772.4v2M778.7 84.0h2M779.7 83.0v2M778.7 122.3h2M779.7 121.3v2M778.7 160.6h2M779.7 159.6v2M778.7 198.89999999999998h2M779.7 197.89999999999998v2M778.7 237.2h2M779.7 236.2v2M778.7 275.5h2M779.7 274.5v2M778.7 313.79999999999995h2M779.7 312.79999999999995v2M778.7 352.09999999999997h2M779.7 351.09999999999997v2M778.7 390.4h2M779.7 389.4v2M778.7 428.7h2M779.7 427.7v2M778.7 467.0h2M779.7 466.0v2M778.7 505.29999999999995h2M779.7 504.29999999999995v2M778.7 543.5999999999999h2M779.7 542.5999999999999v2M778.7 581.9h2M779.7 580.9v2M778.7 620.1999999999999h2M779.7 619.1999999999999v2M778.7 658.5h2M779.7 657.5v2M778.7 696.8h2M779.7 695.8v2M778.7 735.0999999999999h2M779.7 734.0999999999999v2M778.7 773.4h2M779.7 772.4v2M821.8 84.0h2M822.8 83.0v2M821.8 122.3h2M822.8 121.3v2M821.8 160.6h2M822.8 159.6v2M821.8 198.89999999999998h2M822.8 197.89999999999998v2M821.8 237.2h2M822.8 236.2v2M821.8 275.5h2M822.8 274.5v2M821.8 313.79999999999995h2M822.8 312.79999999999995v2M821.8 352.09999999999997h2M822.8 351.09999999999997v2M821.8 390.4h2M822.8 389.4v2M821.8 428.7h2M822.8 427.7v2M821.8 467.0h2M822.8 466.0v2M821.8 505.29999999999995h2M822.8 504.29999999999995v2M821.8 543.5999999999999h2M822.8 542.5999999999999v2M821.8 581.9h2M822.8 580.9v2M821.8 620.1999999999999h2M822.8 619.1999999999999v2M821.8 658.5h2M822.8 657.5v2M821.8 696.8h2M822.8 695.8v2M821.8 735.0999999999999h2M822.8 734.0999999999999v2M821.8 773.4h2M822.8 772.4v2M864.9000000000001 84.0h2M865.9000000000001 83.0v2M864.9000000000001 122.3h2M865.9000000000001 121.3v2M864.9000000000001 160.6h2M865.9000000000001 159.6v2M864.9000000000001 198.89999999999998h2M865.9000000000001 197.89999999999998v2M864.9000000000001 237.2h2M865.9000000000001 236.2v2M864.9000000000001 275.5h2M865.9000000000001 274.5v2M864.9000000000001 313.79999999999995h2M865.9000000000001 312.79999999999995v2M864.9000000000001 352.09999999999997h2M865.9000000000001 351.09999999999997v2M864.9000000000001 390.4h2M865.9000000000001 389.4v2M864.9000000000001 428.7h2M865.9000000000001 427.7v2M864.9000000000001 467.0h2M865.9000000000001 466.0v2M864.9000000000001 505.29999999999995h2M865.9000000000001 504.29999999999995v2M864.9000000000001 543.5999999999999h2M865.9000000000001 542.5999999999999v2M864.9000000000001 581.9h2M865.9000000000001 580.9v2M864.9000000000001 620.1999999999999h2M865.9000000000001 619.1999999999999v2M864.9000000000001 658.5h2M865.9000000000001 657.5v2M864.9000000000001 696.8h2M865.9000000000001 695.8v2M864.9000000000001 735.0999999999999h2M865.9000000000001 734.0999999999999v2M864.9000000000001 773.4h2M865.9000000000001 772.4v2M908.0 84.0h2M909.0 83.0v2M908.0 122.3h2M909.0 121.3v2M908.0 160.6h2M909.0 159.6v2M908.0 198.89999999999998h2M909.0 197.89999999999998v2M908.0 237.2h2M909.0 236.2v2M908.0 275.5h2M909.0 274.5v2M908.0 313.79999999999995h2M909.0 312.79999999999995v2M908.0 352.09999999999997h2M909.0 351.09999999999997v2M908.0 390.4h2M909.0 389.4v2M908.0 428.7h2M909.0 427.7v2M908.0 467.0h2M909.0 466.0v2M908.0 505.29999999999995h2M909.0 504.29999999999995v2M908.0 543.5999999999999h2M909.0 542.5999999999999v2M908.0 581.9h2M909.0 580.9v2M908.0 620.1999999999999h2M909.0 619.1999999999999v2M908.0 658.5h2M909.0 657.5v2M908.0 696.8h2M909.0 695.8v2M908.0 735.0999999999999h2M909.0 734.0999999999999v2M908.0 773.4h2M909.0 772.4v2M951.1 84.0h2M952.1 83.0v2M951.1 122.3h2M952.1 121.3v2M951.1 160.6h2M952.1 159.6v2M951.1 198.89999999999998h2M952.1 197.89999999999998v2M951.1 237.2h2M952.1 236.2v2M951.1 275.5h2M952.1 274.5v2M951.1 313.79999999999995h2M952.1 312.79999999999995v2M951.1 352.09999999999997h2M952.1 351.09999999999997v2M951.1 390.4h2M952.1 389.4v2M951.1 428.7h2M952.1 427.7v2M951.1 467.0h2M952.1 466.0v2M951.1 505.29999999999995h2M952.1 504.29999999999995v2M951.1 543.5999999999999h2M952.1 542.5999999999999v2M951.1 581.9h2M952.1 580.9v2M951.1 620.1999999999999h2M952.1 619.1999999999999v2M951.1 658.5h2M952.1 657.5v2M951.1 696.8h2M952.1 695.8v2M951.1 735.0999999999999h2M952.1 734.0999999999999v2M951.1 773.4h2M952.1 772.4v2M994.2 84.0h2M995.2 83.0v2M994.2 122.3h2M995.2 121.3v2M994.2 160.6h2M995.2 159.6v2M994.2 198.89999999999998h2M995.2 197.89999999999998v2M994.2 237.2h2M995.2 236.2v2M994.2 275.5h2M995.2 274.5v2M994.2 313.79999999999995h2M995.2 312.79999999999995v2M994.2 352.09999999999997h2M995.2 351.09999999999997v2M994.2 390.4h2M995.2 389.4v2M994.2 428.7h2M995.2 427.7v2M994.2 467.0h2M995.2 466.0v2M994.2 505.29999999999995h2M995.2 504.29999999999995v2M994.2 543.5999999999999h2M995.2 542.5999999999999v2M994.2 581.9h2M995.2 580.9v2M994.2 620.1999999999999h2M995.2 619.1999999999999v2M994.2 658.5h2M995.2 657.5v2M994.2 696.8h2M995.2 695.8v2M994.2 735.0999999999999h2M995.2 734.0999999999999v2M994.2 773.4h2M995.2 772.4v2M1037.3000000000002 84.0h2M1038.3000000000002 83.0v2M1037.3000000000002 122.3h2M1038.3000000000002 121.3v2M1037.3000000000002 160.6h2M1038.3000000000002 159.6v2M1037.3000000000002 198.89999999999998h2M1038.3000000000002 197.89999999999998v2M1037.3000000000002 237.2h2M1038.3000000000002 236.2v2M1037.3000000000002 275.5h2M1038.3000000000002 274.5v2M1037.3000000000002 313.79999999999995h2M1038.3000000000002 312.79999999999995v2M1037.3000000000002 352.09999999999997h2M1038.3000000000002 351.09999999999997v2M1037.3000000000002 390.4h2M1038.3000000000002 389.4v2M1037.3000000000002 428.7h2M1038.3000000000002 427.7v2M1037.3000000000002 467.0h2M1038.3000000000002 466.0v2M1037.3000000000002 505.29999999999995h2M1038.3000000000002 504.29999999999995v2M1037.3000000000002 543.5999999999999h2M1038.3000000000002 542.5999999999999v2M1037.3000000000002 581.9h2M1038.3000000000002 580.9v2M1037.3000000000002 620.1999999999999h2M1038.3000000000002 619.1999999999999v2M1037.3000000000002 658.5h2M1038.3000000000002 657.5v2M1037.3000000000002 696.8h2M1038.3000000000002 695.8v2M1037.3000000000002 735.0999999999999h2M1038.3000000000002 734.0999999999999v2M1037.3000000000002 773.4h2M1038.3000000000002 772.4v2M1080.4 84.0h2M1081.4 83.0v2M1080.4 122.3h2M1081.4 121.3v2M1080.4 160.6h2M1081.4 159.6v2M1080.4 198.89999999999998h2M1081.4 197.89999999999998v2M1080.4 237.2h2M1081.4 236.2v2M1080.4 275.5h2M1081.4 274.5v2M1080.4 313.79999999999995h2M1081.4 312.79999999999995v2M1080.4 352.09999999999997h2M1081.4 351.09999999999997v2M1080.4 390.4h2M1081.4 389.4v2M1080.4 428.7h2M1081.4 427.7v2M1080.4 467.0h2M1081.4 466.0v2M1080.4 505.29999999999995h2M1081.4 504.29999999999995v2M1080.4 543.5999999999999h2M1081.4 542.5999999999999v2M1080.4 581.9h2M1081.4 580.9v2M1080.4 620.1999999999999h2M1081.4 619.1999999999999v2M1080.4 658.5h2M1081.4 657.5v2M1080.4 696.8h2M1081.4 695.8v2M1080.4 735.0999999999999h2M1081.4 734.0999999999999v2M1080.4 773.4h2M1081.4 772.4v2M1123.5 84.0h2M1124.5 83.0v2M1123.5 122.3h2M1124.5 121.3v2M1123.5 160.6h2M1124.5 159.6v2M1123.5 198.89999999999998h2M1124.5 197.89999999999998v2M1123.5 237.2h2M1124.5 236.2v2M1123.5 275.5h2M1124.5 274.5v2M1123.5 313.79999999999995h2M1124.5 312.79999999999995v2M1123.5 352.09999999999997h2M1124.5 351.09999999999997v2M1123.5 390.4h2M1124.5 389.4v2M1123.5 428.7h2M1124.5 427.7v2M1123.5 467.0h2M1124.5 466.0v2M1123.5 505.29999999999995h2M1124.5 504.29999999999995v2M1123.5 543.5999999999999h2M1124.5 542.5999999999999v2M1123.5 581.9h2M1124.5 580.9v2M1123.5 620.1999999999999h2M1124.5 619.1999999999999v2M1123.5 658.5h2M1124.5 657.5v2M1123.5 696.8h2M1124.5 695.8v2M1123.5 735.0999999999999h2M1124.5 734.0999999999999v2M1123.5 773.4h2M1124.5 772.4v2M1166.6 84.0h2M1167.6 83.0v2M1166.6 122.3h2M1167.6 121.3v2M1166.6 160.6h2M1167.6 159.6v2M1166.6 198.89999999999998h2M1167.6 197.89999999999998v2M1166.6 237.2h2M1167.6 236.2v2M1166.6 275.5h2M1167.6 274.5v2M1166.6 313.79999999999995h2M1167.6 312.79999999999995v2M1166.6 352.09999999999997h2M1167.6 351.09999999999997v2M1166.6 390.4h2M1167.6 389.4v2M1166.6 428.7h2M1167.6 427.7v2M1166.6 467.0h2M1167.6 466.0v2M1166.6 505.29999999999995h2M1167.6 504.29999999999995v2M1166.6 543.5999999999999h2M1167.6 542.5999999999999v2M1166.6 581.9h2M1167.6 580.9v2M1166.6 620.1999999999999h2M1167.6 619.1999999999999v2M1166.6 658.5h2M1167.6 657.5v2M1166.6 696.8h2M1167.6 695.8v2M1166.6 735.0999999999999h2M1167.6 734.0999999999999v2M1166.6 773.4h2M1167.6 772.4v2M1209.7 84.0h2M1210.7 83.0v2M1209.7 122.3h2M1210.7 121.3v2M1209.7 160.6h2M1210.7 159.6v2M1209.7 198.89999999999998h2M1210.7 197.89999999999998v2M1209.7 237.2h2M1210.7 236.2v2M1209.7 275.5h2M1210.7 274.5v2M1209.7 313.79999999999995h2M1210.7 312.79999999999995v2M1209.7 352.09999999999997h2M1210.7 351.09999999999997v2M1209.7 390.4h2M1210.7 389.4v2M1209.7 428.7h2M1210.7 427.7v2M1209.7 467.0h2M1210.7 466.0v2M1209.7 505.29999999999995h2M1210.7 504.29999999999995v2M1209.7 543.5999999999999h2M1210.7 542.5999999999999v2M1209.7 581.9h2M1210.7 580.9v2M1209.7 620.1999999999999h2M1210.7 619.1999999999999v2M1209.7 658.5h2M1210.7 657.5v2M1209.7 696.8h2M1210.7 695.8v2M1209.7 735.0999999999999h2M1210.7 734.0999999999999v2M1209.7 773.4h2M1210.7 772.4v2" stroke="#e2e2e2" stroke-width="0.8"/>
<rect x="874" y="70" width="339.98" height="68.6" fill="#fff" stroke="#8c8c8c"/>
<line x1="874" y1="81.6" x2="1213.98" y2="81.6" stroke="#8c8c8c"/>
<line x1="874" y1="93.0" x2="1213.98" y2="93.0" stroke="#8c8c8c"/>
<line x1="874" y1="104.4" x2="1213.98" y2="104.4" stroke="#8c8c8c"/>
<line x1="874" y1="115.8" x2="1213.98" y2="115.8" stroke="#8c8c8c"/>
<line x1="874" y1="127.2" x2="1213.98" y2="127.2" stroke="#8c8c8c"/>
<line x1="887.3" y1="70" x2="887.3" y2="138.6" stroke="#8c8c8c"/>
<line x1="916.2" y1="70" x2="916.2" y2="138.6" stroke="#8c8c8c"/>
<line x1="929.3" y1="70" x2="929.3" y2="138.6" stroke="#8c8c8c"/>
<line x1="942.24" y1="70" x2="942.24" y2="138.6" stroke="#8c8c8c"/>
<line x1="955.18" y1="70" x2="955.18" y2="138.6" stroke="#8c8c8c"/>
<line x1="968.12" y1="70" x2="968.12" y2="138.6" stroke="#8c8c8c"/>
<line x1="981.06" y1="70" x2="981.06" y2="138.6" stroke="#8c8c8c"/>
<line x1="994.0" y1="70" x2="994.0" y2="138.6" stroke="#8c8c8c"/>
<line x1="1006.9399999999999" y1="70" x2="1006.9399999999999" y2="138.6" stroke="#8c8c8c"/>
<line x1="1019.88" y1="70" x2="1019.88" y2="138.6" stroke="#8c8c8c"/>
<line x1="1032.82" y1="70" x2="1032.82" y2="138.6" stroke="#8c8c8c"/>
<line x1="1045.76" y1="70" x2="1045.76" y2="138.6" stroke="#8c8c8c"/>
<line x1="1058.7" y1="70" x2="1058.7" y2="138.6" stroke="#8c8c8c"/>
<line x1="1071.6399999999999" y1="70" x2="1071.6399999999999" y2="138.6" stroke="#8c8c8c"/>
<line x1="1084.58" y1="70" x2="1084.58" y2="138.6" stroke="#8c8c8c"/>
<line x1="1097.52" y1="70" x2="1097.52" y2="138.6" stroke="#8c8c8c"/>
<line x1="1110.46" y1="70" x2="1110.46" y2="138.6" stroke="#8c8c8c"/>
<line x1="1123.3999999999999" y1="70" x2="1123.3999999999999" y2="138.6" stroke="#8c8c8c"/>
<line x1="1136.34" y1="70" x2="1136.34" y2="138.6" stroke="#8c8c8c"/>
<line x1="1149.28" y1="70" x2="1149.28" y2="138.6" stroke="#8c8c8c"/>
<line x1="1162.22" y1="70" x2="1162.22" y2="138.6" stroke="#8c8c8c"/>
<line x1="1175.1599999999999" y1="70" x2="1175.1599999999999" y2="138.6" stroke="#8c8c8c"/>
<line x1="1188.1" y1="70" x2="1188.1" y2="138.6" stroke="#8c8c8c"/>
<line x1="1201.04" y1="70" x2="1201.04" y2="138.6" stroke="#8c8c8c"/>
<text x="875.5" y="79.14999999999999" font-size="8" fill="#222" letter-spacing="0.8">20</text>
<text x="888.5" y="79.14999999999999" font-size="7.8" fill="#222" letter-spacing="0.15">TFM7</text>
<text x="918" y="79.14999999999999" font-size="8.3" fill="#222">1</text>
<text x="875.5" y="90.5" font-size="8" fill="#222" letter-spacing="0.8">21</text>
<text x="888.5" y="90.5" font-size="7.8" fill="#222" letter-spacing="0.15">TFM8</text>
<text x="918" y="90.5" font-size="8.3" fill="#222">1</text>
<text x="875.5" y="101.9" font-size="8" fill="#222" letter-spacing="0.8">22</text>
<text x="888.5" y="101.9" font-size="7.8" fill="#222" letter-spacing="0.15">TFM9</text>
<text x="918" y="101.9" font-size="8.3" fill="#222">1</text>
<text x="875.5" y="113.3" font-size="8" fill="#222" letter-spacing="0.8">23</text>
<text x="888.5" y="113.3" font-size="7.8" fill="#222" letter-spacing="0.15">TFM10</text>
<text x="918" y="113.3" font-size="8.3" fill="#222">1</text>
<text x="875.5" y="124.7" font-size="8" fill="#222" letter-spacing="0.8">24</text>
<text x="888.5" y="124.7" font-size="7.8" fill="#222" letter-spacing="0.15">TFM11</text>
<text x="918" y="124.7" font-size="8.3" fill="#222">1</text>
<text x="875.5" y="136.1" font-size="8" fill="#222" letter-spacing="0.8">25</text>
<text x="888.5" y="136.1" font-size="7.8" fill="#222" letter-spacing="0.15">TFM12</text>
<text x="918" y="136.1" font-size="8.3" fill="#222">1</text>
<text x="1187" y="90.5" font-size="8.5" fill="#222">X</text>
<text x="1200" y="102" font-size="8.5" fill="#222">X</text>
<text x="1123" y="80" font-size="8.5" fill="#222">X</text>
<path d="M435 297 H462 L531 427" fill="none" stroke="#4a4a4a" stroke-width="1.4"/>
<path d="M435 427.5 H1216" fill="none" stroke="#4a4a4a" stroke-width="1.6"/>
<path d="M531 427 V581" fill="none" stroke="#4a4a4a" stroke-width="1.6"/>
<path d="M435 504.5 H531 M435 581 H531" fill="none" stroke="#4a4a4a" stroke-width="1.5"/>
<path d="M531 581 L435 680" fill="none" stroke="#4a4a4a" stroke-width="1.3"/>
<path d="M780 427 V566 H1159" fill="none" stroke="#4a4a4a" stroke-width="1.6"/>
<path d="M531 297 V427" stroke="#f6f38e" stroke-width="7" fill="none"/>
<path d="M528 425.5 H780" stroke="#f6f38e" stroke-width="5" fill="none"/>
<path d="M780 430 V259" stroke="#f6f38e" stroke-width="6.5" fill="none"/>
<path d="M777 258.5 H1021" stroke="#f6f38e" stroke-width="8" fill="none"/>
<path d="M531 297 V427.5 H780 V259.5 H1021" fill="none" stroke="#5e5e30" stroke-width="1.8"/>
<path d="M497 362 L531 427" fill="none" stroke="#4a4a4a" stroke-width="1.4"/>
<path d="M780 332.3 H1184" stroke="#6e5a72" stroke-width="1.2"/>
<path d="M780 335.8 H1184" stroke="#5a4862" stroke-width="1.5"/>
<path d="M780 339.4 H1184" stroke="#8a6684" stroke-width="1.2"/>
<path d="M780 333.5 H1184 M780 337.8 H1184" stroke="#f4e8f4" stroke-width="1.6"/>
<path d="M1180.5 331 L1187.5 335.8 L1180.5 340.5 Z" fill="#111"/>
<defs><pattern id="hatch" patternUnits="userSpaceOnUse" width="4" height="4"><rect width="4" height="4" fill="#f8e2f6"/><path d="M-1 5 L5 -1 M3 5 L5 3 M-1 1 L1 -1" stroke="#7a4a8a" stroke-width="1.1"/></pattern></defs>
<path d="M780 566 L899 697 H1047" fill="none" stroke="#a87aa8" stroke-width="8.6" stroke-linejoin="miter"/>
<path d="M780 566 L899 697 H1047" fill="none" stroke="url(#hatch)" stroke-width="6.8" stroke-linejoin="miter"/>
<path d="M780 566 L899 697 H1047" fill="none" stroke="#4a2a5a" stroke-width="1"/>
<circle cx="531" cy="297" r="2.7" fill="#000"/>
<circle cx="531" cy="427.5" r="2.7" fill="#000"/>
<circle cx="531" cy="504.5" r="2.7" fill="#000"/>
<circle cx="531" cy="581" r="2.7" fill="#000"/>
<circle cx="780" cy="427.5" r="2.7" fill="#000"/>
<circle cx="780" cy="335.8" r="2.7" fill="#000"/>
<circle cx="780" cy="566" r="2.7" fill="#000"/>
<circle cx="1021" cy="259.5" r="2.7" fill="#000"/>
<circle cx="1159" cy="566" r="2.7" fill="#000"/>
<circle cx="1047" cy="697" r="2.7" fill="#000"/>
<text x="534" y="425.5" font-size="4.6" fill="#2a2a5a" text-anchor="start">N12</text>
<text x="784" y="425.5" font-size="4.6" fill="#2a2a5a" text-anchor="start">N1</text>
<text x="536" y="503" font-size="4.6" fill="#2a2a7a" text-anchor="start">N20</text>
<text x="536" y="579.5" font-size="4.6" fill="#2a2a7a" text-anchor="start">N753</text>
<text x="531" y="293" font-size="4.6" fill="#111" text-anchor="middle" font-weight="bold">C-002</text>
<text x="1062" y="280" font-size="4.6" fill="#111" text-anchor="middle" font-weight="bold">C-002</text>
<text x="545" y="327" font-size="5.5" fill="#4a4ad0" text-anchor="middle">v</text>
<text x="545" y="391" font-size="5.5" fill="#4a4ad0" text-anchor="middle">v</text>
<text x="505.5" y="360" font-size="5.6" fill="#1e6a4a" text-anchor="middle" transform="rotate(-62 505.5 360)" font-weight="bold">240</text>
<text x="522" y="364" font-size="5.6" fill="#1e6a4a" text-anchor="middle" transform="rotate(-90 522 364)" font-weight="bold">220</text>
<text x="579" y="440" font-size="5.6" fill="#4a4ad0" text-anchor="middle">120</text>
<text x="656" y="421" font-size="5.6" fill="#1e6a4a" text-anchor="middle" font-weight="bold">180</text>
<text x="704" y="440" font-size="5.6" fill="#4a4ad0" text-anchor="middle">90</text>
<text x="521" y="467" font-size="5.6" fill="#1e6a4a" text-anchor="middle" transform="rotate(-90 521 467)" font-weight="bold">60</text>
<text x="458" y="498" font-size="5.6" fill="#1e6a4a" text-anchor="middle" font-weight="bold">220</text>
<text x="521" y="543" font-size="5.6" fill="#1e6a4a" text-anchor="middle" transform="rotate(-90 521 543)" font-weight="bold">100</text>
<text x="458" y="575" font-size="5.6" fill="#1e6a4a" text-anchor="middle" font-weight="bold">250</text>
<text x="459" y="641" font-size="5.6" fill="#1e6a4a" text-anchor="middle" transform="rotate(-45 459 641)" font-weight="bold">180</text>
<text x="771" y="497" font-size="5.6" fill="#1e6a4a" text-anchor="middle" transform="rotate(-90 771 497)" font-weight="bold">82</text>
<text x="771" y="381" font-size="5.6" fill="#1e6a4a" text-anchor="middle" transform="rotate(-90 771 381)" font-weight="bold">50</text>
<text x="901" y="252" font-size="5.6" fill="#1e6a4a" text-anchor="middle" font-weight="bold">450</text>
<text x="857" y="272" font-size="5.6" fill="#4a4ad0" text-anchor="middle">170</text>
<text x="978" y="272" font-size="5.6" fill="#4a4ad0" text-anchor="middle">80</text>
<text x="983" y="326" font-size="5.6" fill="#1e6a4a" text-anchor="middle" font-weight="bold">400</text>
<text x="835" y="440" font-size="5.6" fill="#4a4ad0" text-anchor="middle">60</text>
<text x="943" y="440" font-size="5.6" fill="#4a4ad0" text-anchor="middle">100</text>
<text x="1012" y="421" font-size="5.6" fill="#1e6a4a" text-anchor="middle" font-weight="bold">150</text>
<text x="1065" y="440" font-size="5.6" fill="#4a4ad0" text-anchor="middle">90</text>
<text x="1191" y="440" font-size="5.6" fill="#4a4ad0" text-anchor="middle">100</text>
<text x="943" y="559" font-size="5.6" fill="#1e6a4a" text-anchor="middle" font-weight="bold">480</text>
<text x="887" y="580" font-size="5.6" fill="#4a4ad0" text-anchor="middle">300</text>
<text x="1055" y="580" font-size="5.6" fill="#4a4ad0" text-anchor="middle">380</text>
<text x="850" y="625" font-size="5.6" fill="#1e6a4a" text-anchor="middle" transform="rotate(50 850 625)" font-weight="bold">430</text>
<text x="530.5" y="252" text-anchor="middle" font-size="14" font-weight="bold" fill="#1e1a60" letter-spacing="0.6">C–12</text>
<rect x="516.5" y="256" width="30" height="9" rx="2" fill="#fff" stroke="#8a8a8a" stroke-width="1"/>
<rect x="522.5" y="258" width="18" height="5" rx="1" fill="none" stroke="#8a8a8a" stroke-width="0.8"/>
<rect x="504" y="264" width="55" height="19" rx="9.5" fill="#fff" stroke="#8a8a8a" stroke-width="1.2"/>
<rect x="507" y="267" width="49" height="13" rx="6.5" fill="#d2d2d2" stroke="#8a8a8a" stroke-width="1"/>
<rect x="511" y="269.5" width="41" height="8" rx="4.0" fill="#fff" stroke="#7a7a7a" stroke-width="1"/>
<path d="M513.0 272.5 H519.0 M516.0 272.5 V275.5" stroke="#777" stroke-width="0.9"/>
<path d="M523.3333333333334 272.5 H529.3333333333334 M526.3333333333334 272.5 V275.5" stroke="#777" stroke-width="0.9"/>
<path d="M533.6666666666666 272.5 H539.6666666666666 M536.6666666666666 272.5 V275.5" stroke="#777" stroke-width="0.9"/>
<path d="M544.0 272.5 H550.0 M547.0 272.5 V275.5" stroke="#777" stroke-width="0.9"/>
<path d="M499 273.5 L502 271.0 V276.0 Z" fill="#888"/>
<path d="M562 270.5 V276.5" stroke="#888" stroke-width="1"/>
<rect x="571.4" y="255.7" width="59.60000000000002" height="48.60000000000002" fill="#fff" stroke="#9a9a9a" stroke-width="1"/>
<line x1="571.4" y1="265.8" x2="631" y2="265.8" stroke="#9a9a9a" stroke-width="1"/>
<line x1="571.4" y1="275.4" x2="631" y2="275.4" stroke="#9a9a9a" stroke-width="1"/>
<line x1="571.4" y1="284.6" x2="631" y2="284.6" stroke="#9a9a9a" stroke-width="1"/>
<line x1="571.4" y1="294.3" x2="631" y2="294.3" stroke="#9a9a9a" stroke-width="1"/>
<line x1="586" y1="255.7" x2="586" y2="304.3" stroke="#9a9a9a" stroke-width="1"/>
<line x1="608" y1="255.7" x2="608" y2="304.3" stroke="#9a9a9a" stroke-width="1"/>
<text x="572.9" y="263.75" font-size="7.4" fill="#3a3ac0" letter-spacing="0.3">Cav</text>
<text x="587.5" y="263.75" font-size="7.4" fill="#3a3ac0" letter-spacing="0.3">No.</text>
<text x="609.5" y="263.75" font-size="7.4" fill="#3a3ac0" letter-spacing="0.3">Term</text>
<text x="572.9" y="273.6" font-size="7.4" fill="#222" letter-spacing="0.3">1</text>
<text x="587.5" y="273.6" font-size="7.4" fill="#222" letter-spacing="0.3">W-3</text>
<text x="609.5" y="273.6" font-size="7.4" fill="#222" letter-spacing="0.3">T-001</text>
<text x="572.9" y="283.0" font-size="7.4" fill="#222" letter-spacing="0.3">2</text>
<text x="587.5" y="283.0" font-size="7.4" fill="#222" letter-spacing="0.3">W-4</text>
<text x="609.5" y="283.0" font-size="7.4" fill="#222" letter-spacing="0.3">T-001</text>
<text x="572.9" y="292.45000000000005" font-size="7.4" fill="#222" letter-spacing="0.3">3</text>
<text x="587.5" y="292.45000000000005" font-size="7.4" fill="#222" letter-spacing="0.3">W-31</text>
<text x="609.5" y="292.45000000000005" font-size="7.4" fill="#222" letter-spacing="0.3">T-001</text>
<text x="572.9" y="302.3" font-size="7.4" fill="#222" letter-spacing="0.3">4</text>
<text x="587.5" y="302.3" font-size="7.4" fill="#222" letter-spacing="0.3">W-32</text>
<text x="609.5" y="302.3" font-size="7.4" fill="#222" letter-spacing="0.3">T-001</text>
<rect x="568" y="285.3" width="76.60000000000002" height="23.69999999999999" fill="none" stroke="rgba(0,0,0,0.13)" stroke-width="3"/><rect x="566" y="283.3" width="76.60000000000002" height="23.69999999999999" fill="none" stroke="#cc2a2a" stroke-width="1.8"/>
<rect x="552" y="331" width="44" height="42.5" fill="#fff" stroke="#9a9a9a" stroke-width="1"/>
<line x1="552" y1="344" x2="596" y2="344" stroke="#9a9a9a" stroke-width="1"/>
<line x1="552" y1="354.5" x2="596" y2="354.5" stroke="#9a9a9a" stroke-width="1"/>
<line x1="552" y1="364.5" x2="596" y2="364.5" stroke="#9a9a9a" stroke-width="1"/>
<text x="574.0" y="340.7" text-anchor="middle" font-size="8" font-weight="bold" fill="#2a2ab0" letter-spacing="0.3">SP5</text>
<line x1="575.5" y1="344" x2="575.5" y2="373.5" stroke="#9a9a9a" stroke-width="1"/>
<text x="553.5" y="352.25" font-size="7.1" fill="#3a3ac0" letter-spacing="0.15">Cavity</text>
<text x="577.0" y="352.25" font-size="7.1" fill="#3a3ac0" letter-spacing="0.15">No.</text>
<text x="553.5" y="362.5" font-size="7.1" fill="#222" letter-spacing="0.15">R</text>
<text x="577.0" y="362.5" font-size="7.1" fill="#222" letter-spacing="0.15">W-32</text>
<text x="553.5" y="372.0" font-size="7.1" fill="#222" letter-spacing="0.15">CS</text>
<text x="577.0" y="372.0" font-size="7.1" fill="#222" letter-spacing="0.15">W-31</text>
<rect x="547.4" y="329" width="56.60000000000002" height="50" fill="none" stroke="rgba(0,0,0,0.13)" stroke-width="3"/><rect x="545.4" y="327" width="56.60000000000002" height="50" fill="none" stroke="#cc2a2a" stroke-width="1.8"/>
<ellipse cx="531" cy="350" rx="8" ry="5.5" fill="none" stroke="#cc2a1a" stroke-width="1.8"/>
<path d="M528 348 L534 352 M534 348 L528 352" stroke="#2a6a2a" stroke-width="1"/>
<text x="628" y="409.5" text-anchor="middle" font-size="12" font-weight="bold" fill="#1e1a60" letter-spacing="0.4">CLIP100</text>
<rect x="617.5" y="424.0" width="21" height="4.5" fill="#8ab88a" stroke="#3a6a3a" stroke-width="0.9"/><path d="M628 414.0 L622 420.5 H626 V424.0 H630 V420.5 H634 Z" fill="#b4d4f4" stroke="#2a4a7a" stroke-width="1"/><circle cx="628" cy="427.5" r="2.6" fill="#000"/>
<text x="890" y="409.5" text-anchor="middle" font-size="12" font-weight="bold" fill="#1e1a60" letter-spacing="0.4">CLIP 1</text>
<rect x="879.5" y="424.0" width="21" height="4.5" fill="#a8c8ec" stroke="#3a5a8a" stroke-width="0.9"/><path d="M890 414.0 L884 420.5 H888 V424.0 H892 V420.5 H896 Z" fill="#b4d4f4" stroke="#2a4a7a" stroke-width="1"/><circle cx="890" cy="427.5" r="2.6" fill="#000"/>
<text x="995" y="409.5" text-anchor="middle" font-size="12" font-weight="bold" fill="#1e1a60" letter-spacing="0.4">CLIP 2</text>
<rect x="983.5" y="424.0" width="21" height="4.5" fill="#a8c8ec" stroke="#3a5a8a" stroke-width="0.9"/><path d="M994 414.0 L988 420.5 H992 V424.0 H996 V420.5 H1000 Z" fill="#b4d4f4" stroke="#2a4a7a" stroke-width="1"/><circle cx="994" cy="427.5" r="2.6" fill="#000"/>
<rect x="917" y="213" width="44" height="41" fill="#fff" stroke="#9a9a9a" stroke-width="1"/>
<line x1="917" y1="224" x2="961" y2="224" stroke="#9a9a9a" stroke-width="1"/>
<line x1="917" y1="234" x2="961" y2="234" stroke="#9a9a9a" stroke-width="1"/>
<line x1="917" y1="244" x2="961" y2="244" stroke="#9a9a9a" stroke-width="1"/>
<text x="939.0" y="221.7" text-anchor="middle" font-size="8" font-weight="bold" fill="#2a2ab0" letter-spacing="0.3">SP6</text>
<line x1="940" y1="224" x2="940" y2="254" stroke="#9a9a9a" stroke-width="1"/>
<text x="918.5" y="232.0" font-size="7.1" fill="#3a3ac0" letter-spacing="0.15">Cavity</text>
<text x="941.5" y="232.0" font-size="7.1" fill="#3a3ac0" letter-spacing="0.15">No.</text>
<text x="918.5" y="242.0" font-size="7.1" fill="#222" letter-spacing="0.15">R</text>
<text x="941.5" y="242.0" font-size="7.1" fill="#222" letter-spacing="0.15">W-33</text>
<text x="918.5" y="252.0" font-size="7.1" fill="#222" letter-spacing="0.15">CS</text>
<text x="941.5" y="252.0" font-size="7.1" fill="#222" letter-spacing="0.15">W-31</text>
<rect x="914.5" y="211.6" width="55.200000000000045" height="54.400000000000006" fill="none" stroke="rgba(0,0,0,0.13)" stroke-width="3"/><rect x="912.5" y="209.6" width="55.200000000000045" height="54.400000000000006" fill="none" stroke="#cc2a2a" stroke-width="1.8"/>
<ellipse cx="937" cy="259.5" rx="8" ry="5" fill="none" stroke="#cc2a1a" stroke-width="1.8"/>
<path d="M934 257.5 L937 259.5 L934 261.5 Z M940 257.5 L937 259.5 L940 261.5 Z" fill="#333"/>
<text x="1061.5" y="240.5" text-anchor="middle" font-size="13" font-weight="bold" fill="#1e1a60" letter-spacing="0.6">C–2</text>
<rect x="1047.0" y="246" width="30" height="9" rx="2" fill="#fff" stroke="#8a8a8a" stroke-width="1"/>
<rect x="1053.0" y="248" width="18" height="5" rx="1" fill="none" stroke="#8a8a8a" stroke-width="0.8"/>
<rect x="1035" y="254" width="54" height="19" rx="9.5" fill="#fff" stroke="#8a8a8a" stroke-width="1.2"/>
<rect x="1038" y="257" width="48" height="13" rx="6.5" fill="#d2d2d2" stroke="#8a8a8a" stroke-width="1"/>
<rect x="1042" y="259.5" width="40" height="8" rx="4.0" fill="#fff" stroke="#7a7a7a" stroke-width="1"/>
<path d="M1044.0 262.5 H1050.0 M1047.0 262.5 V265.5" stroke="#777" stroke-width="0.9"/>
<path d="M1054.0 262.5 H1060.0 M1057.0 262.5 V265.5" stroke="#777" stroke-width="0.9"/>
<path d="M1064.0 262.5 H1070.0 M1067.0 262.5 V265.5" stroke="#777" stroke-width="0.9"/>
<path d="M1074.0 262.5 H1080.0 M1077.0 262.5 V265.5" stroke="#777" stroke-width="0.9"/>
<path d="M1030 263.5 L1033 261.0 V266.0 Z" fill="#888"/>
<path d="M1092 260.5 V266.5" stroke="#888" stroke-width="1"/>
<circle cx="1033" cy="287" r="3.4" fill="#fff" stroke="#3aa03a" stroke-width="1.4"/><circle cx="1033" cy="287" r="1.1" fill="#3aa03a" opacity="0.7"/>
<circle cx="1045" cy="287" r="3.4" fill="#fff" stroke="#2a2a9a" stroke-width="1.4"/><circle cx="1045" cy="287" r="1.1" fill="#2a2a9a" opacity="0.7"/>
<rect x="1103" y="246" width="60" height="48.80000000000001" fill="#fff" stroke="#9a9a9a" stroke-width="1"/>
<line x1="1103" y1="255.7" x2="1163" y2="255.7" stroke="#9a9a9a" stroke-width="1"/>
<line x1="1103" y1="265.3" x2="1163" y2="265.3" stroke="#9a9a9a" stroke-width="1"/>
<line x1="1103" y1="275" x2="1163" y2="275" stroke="#9a9a9a" stroke-width="1"/>
<line x1="1103" y1="284.9" x2="1163" y2="284.9" stroke="#9a9a9a" stroke-width="1"/>
<line x1="1118" y1="246" x2="1118" y2="294.8" stroke="#9a9a9a" stroke-width="1"/>
<line x1="1139" y1="246" x2="1139" y2="294.8" stroke="#9a9a9a" stroke-width="1"/>
<text x="1104.5" y="253.85" font-size="7.4" fill="#3a3ac0" letter-spacing="0.3">Cav</text>
<text x="1119.5" y="253.85" font-size="7.4" fill="#3a3ac0" letter-spacing="0.3">No.</text>
<text x="1140.5" y="253.85" font-size="7.4" fill="#3a3ac0" letter-spacing="0.3">Term</text>
<text x="1104.5" y="263.5" font-size="7.4" fill="#222" letter-spacing="0.3">1</text>
<text x="1119.5" y="263.5" font-size="7.4" fill="#222" letter-spacing="0.3">W-3</text>
<text x="1140.5" y="263.5" font-size="7.4" fill="#222" letter-spacing="0.3">T-001</text>
<text x="1104.5" y="273.15" font-size="7.4" fill="#222" letter-spacing="0.3">2</text>
<text x="1119.5" y="273.15" font-size="7.4" fill="#222" letter-spacing="0.3">W-4</text>
<text x="1140.5" y="273.15" font-size="7.4" fill="#222" letter-spacing="0.3">T-001</text>
<text x="1104.5" y="282.95" font-size="7.4" fill="#222" letter-spacing="0.3">3</text>
<text x="1119.5" y="282.95" font-size="7.4" fill="#222" letter-spacing="0.3">W-31</text>
<text x="1140.5" y="282.95" font-size="7.4" fill="#222" letter-spacing="0.3">T-001</text>
<text x="1104.5" y="292.85" font-size="7.4" fill="#222" letter-spacing="0.3">4</text>
<text x="1119.5" y="292.85" font-size="7.4" fill="#222" letter-spacing="0.3">W-33</text>
<text x="1140.5" y="292.85" font-size="7.4" fill="#222" letter-spacing="0.3">T-001</text>
<rect x="1095.7" y="274.7" width="90.29999999999995" height="26.100000000000023" fill="none" stroke="rgba(0,0,0,0.13)" stroke-width="3"/><rect x="1093.7" y="272.7" width="90.29999999999995" height="26.100000000000023" fill="none" stroke="#cc2a2a" stroke-width="1.8"/>
<text x="1211" y="317" font-size="13" font-weight="bold" fill="#1e1a60">C</text>
<rect x="1211.0" y="324" width="30" height="9" rx="2" fill="#fff" stroke="#8a8a8a" stroke-width="1"/>
<rect x="1217.0" y="326" width="18" height="5" rx="1" fill="none" stroke="#8a8a8a" stroke-width="0.8"/>
<rect x="1199" y="332" width="54" height="18" rx="9.0" fill="#fff" stroke="#8a8a8a" stroke-width="1.2"/>
<rect x="1202" y="335" width="48" height="12" rx="6.0" fill="#d2d2d2" stroke="#8a8a8a" stroke-width="1"/>
<rect x="1206" y="337.5" width="40" height="7" rx="3.5" fill="#fff" stroke="#7a7a7a" stroke-width="1"/>
<path d="M1208.0 340.0 H1214.0 M1211.0 340.0 V343.0" stroke="#777" stroke-width="0.9"/>
<path d="M1218.0 340.0 H1224.0 M1221.0 340.0 V343.0" stroke="#777" stroke-width="0.9"/>
<path d="M1228.0 340.0 H1234.0 M1231.0 340.0 V343.0" stroke="#777" stroke-width="0.9"/>
<path d="M1238.0 340.0 H1244.0 M1241.0 340.0 V343.0" stroke="#777" stroke-width="0.9"/>
<path d="M1194 341.0 L1197 338.5 V343.5 Z" fill="#888"/>
<path d="M1256 338.0 V344.0" stroke="#888" stroke-width="1"/>
<rect x="1109" y="377.3" width="54.5" height="42.39999999999998" fill="#fff" stroke="#9a9a9a" stroke-width="1"/>
<line x1="1109" y1="389.5" x2="1163.5" y2="389.5" stroke="#9a9a9a" stroke-width="1"/>
<line x1="1109" y1="399.6" x2="1163.5" y2="399.6" stroke="#9a9a9a" stroke-width="1"/>
<line x1="1109" y1="409.6" x2="1163.5" y2="409.6" stroke="#9a9a9a" stroke-width="1"/>
<text x="1136.25" y="386.59999999999997" text-anchor="middle" font-size="8" font-weight="bold" fill="#2a2ab0" letter-spacing="0.3">Solder Sleev</text>
<line x1="1132.3" y1="389.5" x2="1132.3" y2="419.7" stroke="#9a9a9a" stroke-width="1"/>
<text x="1110.5" y="397.55" font-size="7.1" fill="#3a3ac0" letter-spacing="0.15">Cavity</text>
<text x="1133.8" y="397.55" font-size="7.1" fill="#3a3ac0" letter-spacing="0.15">No.</text>
<text x="1110.5" y="407.6" font-size="7.1" fill="#222" letter-spacing="0.15">L</text>
<text x="1133.8" y="407.6" font-size="7.1" fill="#222" letter-spacing="0.15">SHIELD1</text>
<text x="1110.5" y="417.65" font-size="7.1" fill="#222" letter-spacing="0.15">R</text>
<text x="1133.8" y="417.65" font-size="7.1" fill="#222" letter-spacing="0.15">W-30</text>
<path d="M1133 425 L1139 431 M1139 425 L1133 431" stroke="#222" stroke-width="1.1"/>
<rect x="975.4" y="499.6" width="46.39999999999998" height="60.60000000000002" fill="#fff" stroke="#9a9a9a" stroke-width="1"/>
<line x1="975.4" y1="511.4" x2="1021.8" y2="511.4" stroke="#9a9a9a" stroke-width="1"/>
<line x1="975.4" y1="521.5" x2="1021.8" y2="521.5" stroke="#9a9a9a" stroke-width="1"/>
<line x1="975.4" y1="531" x2="1021.8" y2="531" stroke="#9a9a9a" stroke-width="1"/>
<line x1="975.4" y1="540.7" x2="1021.8" y2="540.7" stroke="#9a9a9a" stroke-width="1"/>
<line x1="975.4" y1="550.6" x2="1021.8" y2="550.6" stroke="#9a9a9a" stroke-width="1"/>
<text x="998.5999999999999" y="508.7" text-anchor="middle" font-size="8" font-weight="bold" fill="#2a2ab0" letter-spacing="0.3">SP2</text>
<line x1="999.4" y1="511.4" x2="999.4" y2="560.2" stroke="#9a9a9a" stroke-width="1"/>
<text x="976.9" y="519.45" font-size="7.1" fill="#3a3ac0" letter-spacing="0.15">Cavity</text>
<text x="1000.9" y="519.45" font-size="7.1" fill="#3a3ac0" letter-spacing="0.15">No.</text>
<text x="976.9" y="529.25" font-size="7.1" fill="#222" letter-spacing="0.15">L</text>
<text x="1000.9" y="529.25" font-size="7.1" fill="#222" letter-spacing="0.15">W-12</text>
<text x="976.9" y="538.85" font-size="7.1" fill="#222" letter-spacing="0.15">L</text>
<text x="1000.9" y="538.85" font-size="7.1" fill="#222" letter-spacing="0.15">W-16</text>
<text x="976.9" y="548.6500000000001" font-size="7.1" fill="#222" letter-spacing="0.15">L</text>
<text x="1000.9" y="548.6500000000001" font-size="7.1" fill="#222" letter-spacing="0.15">W-17</text>
<text x="976.9" y="558.4000000000001" font-size="7.1" fill="#222" letter-spacing="0.15">R</text>
<text x="1000.9" y="558.4000000000001" font-size="7.1" fill="#222" letter-spacing="0.15">W-19</text>
<path d="M991 563 L995 566 L991 569 Z M999 563 L995 566 L999 569 Z" fill="#222"/>
<rect x="975.4" y="571.6" width="46" height="13.2" fill="#fff" stroke="#8a8a8a"/><line x1="975.4" y1="578" x2="1021.4" y2="578" stroke="#aaa"/><line x1="1009" y1="571.6" x2="1009" y2="584.8" stroke="#aaa"/>
<text x="977" y="576.5" font-size="3.8" fill="#4a4ad0">PartNumber</text><text x="1010" y="576.5" font-size="3.8" fill="#4a4ad0">Qty</text>
<text x="977" y="583" font-size="3.8" fill="#333">127 12910Q2 (AX)</text><text x="1011" y="583" font-size="3.8" fill="#333">1</text>
<text x="1191" y="543" text-anchor="middle" font-size="13" font-weight="bold" fill="#1e1a60" letter-spacing="0.6">C–8</text>
<rect x="1183" y="548" width="16" height="4" fill="#fff" stroke="#111" stroke-width="1"/>
<rect x="1168.5" y="552" width="45.5" height="31.5" fill="#fff" stroke="#111" stroke-width="2.2"/>
<rect x="1172.5" y="555.8" width="7.5" height="5" rx="0.8" fill="none" stroke="#222" stroke-width="0.9"/>
<rect x="1183.0" y="555.8" width="7.5" height="5" rx="0.8" fill="none" stroke="#222" stroke-width="0.9"/>
<rect x="1193.5" y="555.8" width="7.5" height="5" rx="0.8" fill="none" stroke="#222" stroke-width="0.9"/>
<rect x="1204.0" y="555.8" width="7.5" height="5" rx="0.8" fill="none" stroke="#222" stroke-width="0.9"/>
<rect x="1172.5" y="562.8" width="7.5" height="5" rx="0.8" fill="none" stroke="#222" stroke-width="0.9"/>
<rect x="1183.0" y="562.8" width="7.5" height="5" rx="0.8" fill="none" stroke="#222" stroke-width="0.9"/>
<rect x="1193.5" y="562.8" width="7.5" height="5" rx="0.8" fill="none" stroke="#222" stroke-width="0.9"/>
<rect x="1204.0" y="562.8" width="7.5" height="5" rx="0.8" fill="none" stroke="#222" stroke-width="0.9"/>
<rect x="1172.5" y="569.8" width="7.5" height="5" rx="0.8" fill="none" stroke="#222" stroke-width="0.9"/>
<rect x="1183.0" y="569.8" width="7.5" height="5" rx="0.8" fill="none" stroke="#222" stroke-width="0.9"/>
<rect x="1193.5" y="569.8" width="7.5" height="5" rx="0.8" fill="none" stroke="#222" stroke-width="0.9"/>
<rect x="1204.0" y="569.8" width="7.5" height="5" rx="0.8" fill="none" stroke="#222" stroke-width="0.9"/>
<rect x="1172.5" y="576.8" width="7.5" height="5" rx="0.8" fill="none" stroke="#222" stroke-width="0.9"/>
<rect x="1183.0" y="576.8" width="7.5" height="5" rx="0.8" fill="none" stroke="#222" stroke-width="0.9"/>
<rect x="1193.5" y="576.8" width="7.5" height="5" rx="0.8" fill="none" stroke="#222" stroke-width="0.9"/>
<rect x="1204.0" y="576.8" width="7.5" height="5" rx="0.8" fill="none" stroke="#222" stroke-width="0.9"/>
<text x="1191" y="591.5" font-size="4.6" fill="#111" text-anchor="middle" font-weight="bold">UGS 36 WAY</text>
<text x="1094.5" y="657" text-anchor="middle" font-size="14" font-weight="bold" fill="#1e1a60" letter-spacing="0.8">C–9999</text>
<path d="M1068 662 H1122 L1134 674 V719 L1122 731 H1068 L1055.5 719 V674 Z" fill="#fff" stroke="#111" stroke-width="1.6"/>
<circle cx="1094.8" cy="696" r="31.5" fill="#fff" stroke="#111" stroke-width="2.6"/>
<rect x="1093.5" y="661.5" width="3" height="3" fill="#111"/>
<circle cx="1094.5" cy="676.8" r="4.2" fill="#f4f4f4" stroke="#222" stroke-width="1.3"/>
<circle cx="1077.5" cy="684" r="4.2" fill="#f4f4f4" stroke="#222" stroke-width="1.3"/>
<circle cx="1112" cy="684" r="4.2" fill="#f4f4f4" stroke="#222" stroke-width="1.3"/>
<circle cx="1088.3" cy="692.6" r="4.2" fill="#f4f4f4" stroke="#222" stroke-width="1.3"/>
<circle cx="1101.2" cy="692.6" r="4.2" fill="#f4f4f4" stroke="#222" stroke-width="1.3"/>
<circle cx="1073.1" cy="700.6" r="4.2" fill="#f4f4f4" stroke="#222" stroke-width="1.3"/>
<circle cx="1115.6" cy="700.6" r="4.2" fill="#f4f4f4" stroke="#222" stroke-width="1.3"/>
<circle cx="1094.5" cy="702.4" r="4.2" fill="#f4f4f4" stroke="#222" stroke-width="1.3"/>
<circle cx="1085.4" cy="713.5" r="4.2" fill="#f4f4f4" stroke="#222" stroke-width="1.3"/>
<circle cx="1104.1" cy="713.5" r="4.2" fill="#f4f4f4" stroke="#222" stroke-width="1.3"/>
<text x="1094.5" y="739" font-size="4.6" fill="#111" text-anchor="middle" font-weight="bold">C-61840</text>
<circle cx="1059.5" cy="746" r="3.3" fill="#fff" stroke="#3aa03a" stroke-width="1.4"/><circle cx="1059.5" cy="746" r="1.1" fill="#3aa03a" opacity="0.7"/>
<circle cx="1071" cy="746" r="3.3" fill="#fff" stroke="#2a2a9a" stroke-width="1.4"/><circle cx="1071" cy="746" r="1.1" fill="#2a2a9a" opacity="0.7"/>
<rect x="1142" y="662.0" width="88" height="106.70000000000005" fill="#fff" stroke="#9a9a9a" stroke-width="1"/>
<line x1="1142" y1="671.7" x2="1230" y2="671.7" stroke="#9a9a9a" stroke-width="1"/>
<line x1="1142" y1="681.4" x2="1230" y2="681.4" stroke="#9a9a9a" stroke-width="1"/>
<line x1="1142" y1="691.1" x2="1230" y2="691.1" stroke="#9a9a9a" stroke-width="1"/>
<line x1="1142" y1="700.8" x2="1230" y2="700.8" stroke="#9a9a9a" stroke-width="1"/>
<line x1="1142" y1="710.5" x2="1230" y2="710.5" stroke="#9a9a9a" stroke-width="1"/>
<line x1="1142" y1="720.2" x2="1230" y2="720.2" stroke="#9a9a9a" stroke-width="1"/>
<line x1="1142" y1="729.9" x2="1230" y2="729.9" stroke="#9a9a9a" stroke-width="1"/>
<line x1="1142" y1="739.6" x2="1230" y2="739.6" stroke="#9a9a9a" stroke-width="1"/>
<line x1="1142" y1="749.3" x2="1230" y2="749.3" stroke="#9a9a9a" stroke-width="1"/>
<line x1="1142" y1="759.0" x2="1230" y2="759.0" stroke="#9a9a9a" stroke-width="1"/>
<line x1="1157" y1="662.0" x2="1157" y2="768.7" stroke="#9a9a9a" stroke-width="1"/>
<line x1="1180" y1="662.0" x2="1180" y2="768.7" stroke="#9a9a9a" stroke-width="1"/>
<line x1="1203" y1="662.0" x2="1203" y2="768.7" stroke="#9a9a9a" stroke-width="1"/>
<text x="1143.5" y="669.85" font-size="7.4" fill="#3a3ac0" letter-spacing="0.3">Cav</text>
<text x="1158.5" y="669.85" font-size="7.4" fill="#3a3ac0" letter-spacing="0.3">No.</text>
<text x="1181.5" y="669.85" font-size="7.4" fill="#3a3ac0" letter-spacing="0.3">Term</text>
<text x="1204.5" y="669.85" font-size="7.4" fill="#3a3ac0" letter-spacing="0.3">Sea</text>
<text x="1143.5" y="679.55" font-size="7.4" fill="#222" letter-spacing="0.3">1</text>
<text x="1158.5" y="679.55" font-size="7.4" fill="#222" letter-spacing="0.3">W-15</text>
<text x="1181.5" y="679.55" font-size="7.4" fill="#222" letter-spacing="0.3">T-001</text>
<text x="1204.5" y="679.55" font-size="7.4" fill="#222" letter-spacing="0.3">CS–</text>
<text x="1143.5" y="689.25" font-size="7.4" fill="#222" letter-spacing="0.3">2</text>
<text x="1158.5" y="689.25" font-size="7.4" fill="#222" letter-spacing="0.3">W-14</text>
<text x="1181.5" y="689.25" font-size="7.4" fill="#222" letter-spacing="0.3">T-001</text>
<text x="1204.5" y="689.25" font-size="7.4" fill="#222" letter-spacing="0.3">CS–</text>
<text x="1143.5" y="698.95" font-size="7.4" fill="#222" letter-spacing="0.3">3</text>
<text x="1158.5" y="698.95" font-size="7.4" fill="#222" letter-spacing="0.3">W-17</text>
<text x="1181.5" y="698.95" font-size="7.4" fill="#222" letter-spacing="0.3">T-001</text>
<text x="1204.5" y="698.95" font-size="7.4" fill="#222" letter-spacing="0.3">CS–</text>
<text x="1143.5" y="708.65" font-size="7.4" fill="#222" letter-spacing="0.3">4</text>
<text x="1158.5" y="708.65" font-size="7.4" fill="#222" letter-spacing="0.3">W-26</text>
<text x="1181.5" y="708.65" font-size="7.4" fill="#222" letter-spacing="0.3">T-001</text>
<text x="1204.5" y="708.65" font-size="7.4" fill="#222" letter-spacing="0.3">CS–</text>
<text x="1143.5" y="718.35" font-size="7.4" fill="#222" letter-spacing="0.3">5</text>
<text x="1158.5" y="718.35" font-size="7.4" fill="#222" letter-spacing="0.3">W-25</text>
<text x="1181.5" y="718.35" font-size="7.4" fill="#222" letter-spacing="0.3">T-001</text>
<text x="1204.5" y="718.35" font-size="7.4" fill="#222" letter-spacing="0.3">CS–</text>
<text x="1143.5" y="728.05" font-size="7.4" fill="#222" letter-spacing="0.3">6</text>
<text x="1158.5" y="728.05" font-size="7.4" fill="#222" letter-spacing="0.3">–</text>
<text x="1181.5" y="728.05" font-size="7.4" fill="#222" letter-spacing="0.3">–</text>
<text x="1204.5" y="728.05" font-size="7.4" fill="#222" letter-spacing="0.3">–</text>
<text x="1143.5" y="737.75" font-size="7.4" fill="#222" letter-spacing="0.3">7</text>
<text x="1158.5" y="737.75" font-size="7.4" fill="#222" letter-spacing="0.3">–</text>
<text x="1181.5" y="737.75" font-size="7.4" fill="#222" letter-spacing="0.3">–</text>
<text x="1204.5" y="737.75" font-size="7.4" fill="#222" letter-spacing="0.3">–</text>
<text x="1143.5" y="747.45" font-size="7.4" fill="#222" letter-spacing="0.3">8</text>
<text x="1158.5" y="747.45" font-size="7.4" fill="#222" letter-spacing="0.3">–</text>
<text x="1181.5" y="747.45" font-size="7.4" fill="#222" letter-spacing="0.3">–</text>
<text x="1204.5" y="747.45" font-size="7.4" fill="#222" letter-spacing="0.3">–</text>
<text x="1143.5" y="757.15" font-size="7.4" fill="#222" letter-spacing="0.3">9</text>
<text x="1158.5" y="757.15" font-size="7.4" fill="#222" letter-spacing="0.3">–</text>
<text x="1181.5" y="757.15" font-size="7.4" fill="#222" letter-spacing="0.3">–</text>
<text x="1204.5" y="757.15" font-size="7.4" fill="#222" letter-spacing="0.3">–</text>
<text x="1143.5" y="766.85" font-size="7.4" fill="#222" letter-spacing="0.3">10</text>
<text x="1158.5" y="766.85" font-size="7.4" fill="#222" letter-spacing="0.3">–</text>
<text x="1181.5" y="766.85" font-size="7.4" fill="#222" letter-spacing="0.3">–</text>
<text x="1204.5" y="766.85" font-size="7.4" fill="#222" letter-spacing="0.3">–</text>
</svg>
<div class="a" style="left:428px;top:804px;width:813px;height:4px;background:#f2f2f2;border-bottom:1px solid #8a8a8a"></div>
<svg class="a" style="left:430px;top:804px" width="18" height="5"><path d="M1 4 L4 1 L7 4 Z M9 1 H15 L12 4 Z" fill="#111"/></svg>
<div class="a" style="left:1px;top:807px;width:1242px;height:25px;background:#efefef;border-top:1px solid #d8d8d8;border-bottom:2px solid #a4a4a4;border-left:2px solid #a8a8a8"></div>
<div class="t" style="left:8px;top:815px;font-size:10px;color:#222">Select</div>
<div class="a" style="left:569px;top:813px;width:61px;height:14px;border:1px solid #a0a0a0;border-right-color:#e8e8e8;border-bottom-color:#e8e8e8;background:#f0f0f0"></div><div class="t" style="left:572px;top:816px;font-size:9.4px;letter-spacing:0.3px;color:#222">Snap Obj:On</div>
<div class="a" style="left:634px;top:813px;width:63px;height:14px;border:1px solid #a0a0a0;border-right-color:#e8e8e8;border-bottom-color:#e8e8e8;background:#f0f0f0"></div><div class="t" style="left:637px;top:816px;font-size:9.4px;letter-spacing:0.3px;color:#222">Grid Snap:...</div>
<div class="a" style="left:700px;top:813px;width:62px;height:14px;border:1px solid #a0a0a0;border-right-color:#e8e8e8;border-bottom-color:#e8e8e8;background:#f0f0f0"></div><div class="t" style="left:703px;top:816px;font-size:9.4px;letter-spacing:0.3px;color:#222">Polar Mode...</div>
<div class="a" style="left:766px;top:813px;width:108px;height:14px;border:1px solid #a0a0a0;border-right-color:#e8e8e8;border-bottom-color:#e8e8e8;background:#f0f0f0"></div><div class="t" style="left:769px;top:816px;font-size:9.4px;letter-spacing:0.3px;color:#222"></div>
<svg class="a" style="left:771px;top:815px" width="10" height="10"><path d="M1 0.5 L9 5 L1 9.5 Z" fill="#555"/></svg>
<div class="a" style="left:878px;top:813px;width:92px;height:14px;border:1px solid #a0a0a0;border-right-color:#e8e8e8;border-bottom-color:#e8e8e8;background:#f0f0f0"></div><div class="t" style="left:881px;top:816px;font-size:9.4px;letter-spacing:0.3px;color:#222">Select Count:0</div>
<div class="a" style="left:974px;top:813px;width:193px;height:14px;border:1px solid #a0a0a0;border-right-color:#e8e8e8;border-bottom-color:#e8e8e8;background:#f0f0f0"></div><div class="t" style="left:977px;top:816px;font-size:10.2px;letter-spacing:0.3px;font-weight:bold;color:#222">29.87,-140.88</div>
<div class="a" style="left:1172px;top:813px;width:64px;height:14px;border:1px solid #a0a0a0;border-right-color:#e8e8e8;border-bottom-color:#e8e8e8;background:#f0f0f0"></div><div class="t" style="left:1172px;width:64px;text-align:center;top:816px;font-size:9.4px;letter-spacing:0.3px;color:#222">EN</div>
<div class="a" style="left:1241px;top:38px;width:1px;height:795px;background:#454545"></div><div class="a" style="left:1242px;top:0;width:3px;height:833px;background:#b8b2b2"></div><div class="a" style="left:1245px;top:0;width:1px;height:833px;background:#f4f4f4"></div>
</body></html>
